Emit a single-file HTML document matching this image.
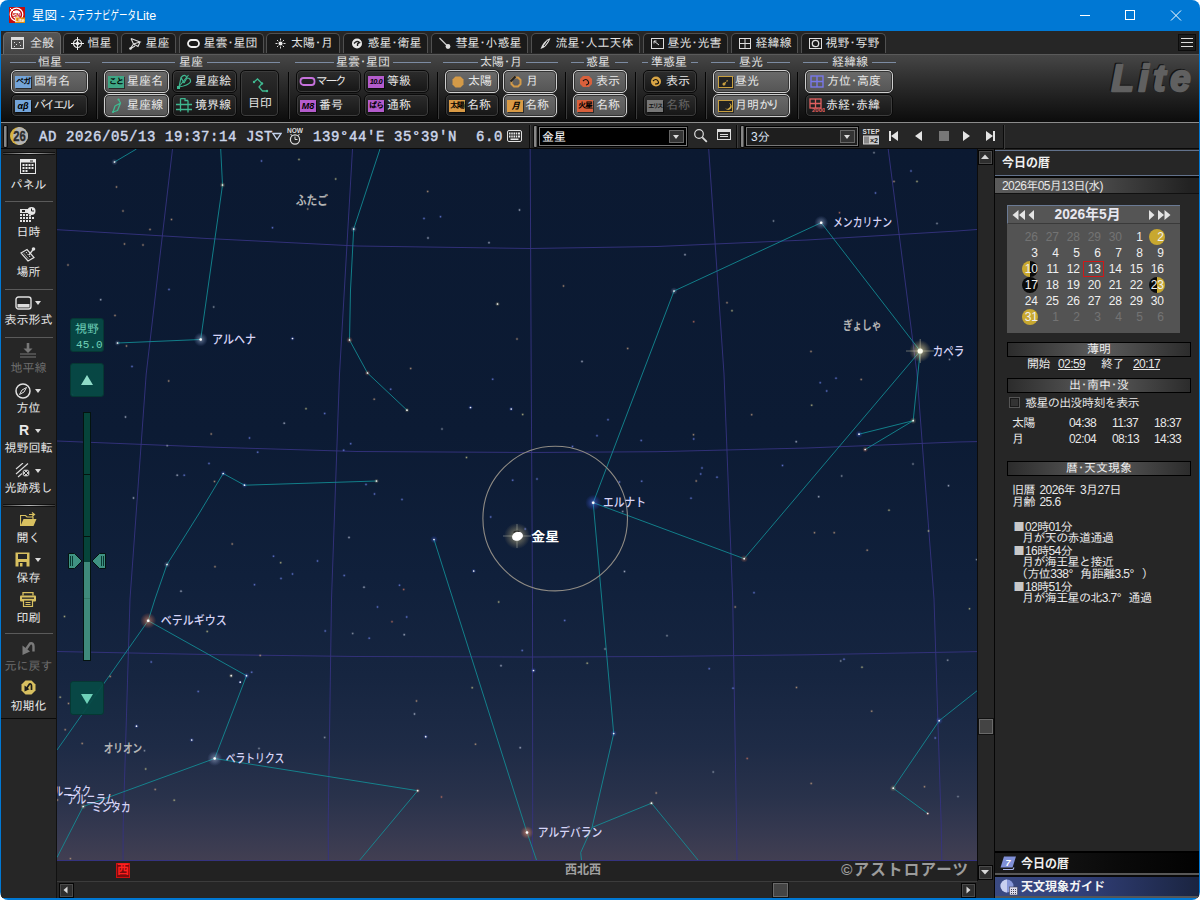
<!DOCTYPE html>
<html lang="ja">
<head>
<meta charset="utf-8">
<title>星図 - ステラナビゲータLite</title>
<style>
*{box-sizing:border-box;margin:0;padding:0}
html,body{width:1200px;height:900px;overflow:hidden;background:#fff}
body{font-family:"Liberation Sans","IPAGothic","Noto Sans CJK JP",sans-serif;font-size:12px;color:#e6e6e6;position:relative}
.abs{position:absolute}
#win{position:absolute;left:0;top:0;width:1200px;height:900px;background:#0078d4;border-radius:8px;overflow:hidden}
#title{position:absolute;left:0;top:0;width:1200px;height:31px;color:#fff}
#title .txt{position:absolute;left:32px;top:7px;font-size:12.5px;line-height:18px;white-space:nowrap;font-family:"Liberation Sans","Noto Sans CJK JP",sans-serif;transform-origin:0 50%}
#kata{display:inline-block;transform:scaleX(.68);transform-origin:0 50%;margin-right:-32px}
#client{position:absolute;left:1px;top:31px;width:1198px;height:867px;background:#262626;overflow:hidden}
/* tabs */
#tabs{position:absolute;left:0;top:0;width:1197px;height:23px;background:#262626}
.tab{position:absolute;top:2px;height:20px;background:#1a1a1a;border:1px solid #505050;border-bottom:none;border-radius:5px 5px 0 0;color:#e4e4e4;font-size:12px;line-height:19px;white-space:nowrap}
.tab.on{top:1px;height:22px;background:linear-gradient(#555,#444);border-color:#6a6a6a;line-height:21px}
.tab span{position:absolute;top:0}
.k{letter-spacing:-2.5px}
b.d{font-weight:normal;display:inline-block;width:6px;text-indent:-3px}
.tab svg{position:absolute}
/* ribbon */
#ribbon{position:absolute;left:0;top:23px;width:1198px;height:68px;background:linear-gradient(#464646 0%,#333 30%,#1c1c1c 70%,#0c0c0c 100%);border-top:1px solid #5a5a5a}
.gl{position:absolute;top:1px;height:13px;font-size:12px;line-height:13px;color:#e0e0e0;text-align:center;white-space:nowrap}
.gline{position:absolute;top:7px;height:1px;background:#7c8ba2}
.sep{position:absolute;top:17px;width:1px;height:47px;background:#050505;box-shadow:1px 0 0 #3a3a3a}
.rb{position:absolute;height:23px;border-radius:5px;background:linear-gradient(#2c2c2c,#161616);border:1px solid #0a0a0a;box-shadow:0 0 0 1px #3c3c3c inset;color:#e8e8e8;font-size:12px;line-height:21px;white-space:nowrap}
.rb.on{background:linear-gradient(#6a6a6a,#555);border:1px solid #cfcfcf;box-shadow:0 0 0 1px #333 inset, 0 0 0 1px #222}
.rb.dis{color:#666}
.rb span{position:absolute;top:0;margin-left:-2px}
.rb svg,.rb i{position:absolute;margin-left:-1px}
.ic{display:block;width:16px;height:12px;font-style:normal;font-size:8px;line-height:12px;box-shadow:1px 1px 0 rgba(0,0,0,.5);text-align:center;color:#000;font-weight:bold;overflow:hidden;letter-spacing:-1px}
/* status */
#status{position:absolute;left:0;top:91px;width:1198px;height:27px;background:#262626;border-top:1px solid #8c8c8c;border-bottom:1px solid #080808}
.mono{font-family:"Liberation Mono",monospace;font-weight:normal;-webkit-text-stroke:.45px #cdd6ea;color:#cdd6ea;font-size:14px;white-space:pre;position:absolute;top:5px;line-height:18px;letter-spacing:.6px}
/* left bar */
#left{position:absolute;left:0;top:118px;width:56px;height:749px;background:#262626}
.lb{position:absolute;left:0;width:55px;text-align:center;font-size:12px;line-height:14px;color:#e8e8e8;white-space:nowrap}
.lb.dis{color:#6c6c6c}
.lsep{position:absolute;left:4px;width:48px;height:1px;background:#5a5a5a}
/* sky */
#sky{position:absolute;left:56px;top:118px;width:920px;height:712px;overflow:hidden;background:#0b1a32}
#compass{position:absolute;left:56px;top:830px;width:920px;height:20px;background:#222}
#hscroll{position:absolute;left:56px;top:850px;width:920px;height:17px;background:#262626;border-top:1px solid #3c3c3c}
#vscroll{position:absolute;left:976px;top:118px;width:18px;height:749px;background:#262626}
/* right */
#right{position:absolute;left:994px;top:118px;width:204px;height:749px;background:#262626;color:#e6e6e6}

#right{font-size:12px;line-height:12px}
#right .bar{position:absolute;left:12px;width:184px;height:15px;border:1px solid #000;background:linear-gradient(90deg,#2c2c2c,#5c5c5c 50%,#2c2c2c);text-align:center;line-height:13px;color:#eee}
#right .t{position:absolute;white-space:nowrap;letter-spacing:-.6px;word-spacing:2px;color:#e8e8e8}
.dg{font-style:normal;margin-right:3px}
#cal{position:absolute;left:12px;top:56px;width:173px;height:128px;background:#535353}
#cal .h{position:absolute;left:0;top:0;width:173px;height:19px;background:#555;border-top:1px solid #6a7a94;border-left:1px solid #6a7a94;border-bottom:1px solid #3a3a3a}
#cal .d{position:absolute;width:20px;height:16px;text-align:right;font:12px/16px "Liberation Sans",sans-serif;color:#f0f0f0}
#cal .d.g{color:#737373}
#cal .m{position:absolute;width:16px;height:16px;border-radius:8px}
</style>
</head>
<body>
<div id="win">
<div id="title">
<svg class="abs" style="left:9px;top:7px" width="16" height="16" viewBox="0 0 16 16"><rect width="16" height="16" fill="#c40d0d"/><circle cx="7.5" cy="7.5" r="6.3" fill="none" stroke="#fff" stroke-width="1.2"/><circle cx="7.5" cy="7.5" r="4.2" fill="#fff"/><line x1="1" y1="1" x2="5" y2="5" stroke="#fff" stroke-width="1"/><text x="7.5" y="9.6" font-size="5.5" font-weight="bold" text-anchor="middle" fill="#c40d0d" font-family="Liberation Sans,sans-serif">SN</text><rect x="6" y="10.5" width="10" height="5.5" fill="#e08a10"/><text x="11" y="15.3" font-size="5.5" font-weight="bold" text-anchor="middle" fill="#fff" font-family="Liberation Sans,sans-serif">Lite</text></svg>
<div class="txt" id="ttxt">星図 - <span id="kata">ステラナビゲータ</span>Lite</div>
<svg class="abs" style="left:1060px;top:0" width="140" height="31" viewBox="0 0 140 31" fill="none" stroke="#fff" stroke-width="1"><line x1="20" y1="15.5" x2="30" y2="15.5"/><rect x="65.5" y="10.5" width="9" height="9"/><line x1="111" y1="10.5" x2="121" y2="20.5"/><line x1="121" y1="10.5" x2="111" y2="20.5"/></svg>
</div>
<div id="client">
<div id="tabs">
<div class="tab on" style="left:2px;width:57.5px"><svg style="left:7px;top:4px" width="13" height="13" viewBox="0 0 13 13"><rect x="0.5" y="0.5" width="12" height="11" fill="none" stroke="#ddd"/><rect x="1" y="1" width="11" height="2" fill="#ddd"/><rect x="3" y="5" width="1" height="1" fill="#ddd"/><rect x="8" y="5" width="1" height="1" fill="#ddd"/><rect x="5" y="7" width="1" height="1" fill="#ddd"/><rect x="3" y="9" width="1" height="1" fill="#ddd"/><rect x="9" y="8" width="1" height="1" fill="#ddd"/></svg><span style="left:26px">全般</span></div>
<div class="tab" style="left:61.5px;width:55.0px"><svg style="left:7px;top:3px" width="13" height="13" viewBox="0 0 13 13"><circle cx="6.5" cy="6.5" r="4" fill="none" stroke="#eee" stroke-width="1.2"/><path d="M6.5 0v13M0 6.5h13" stroke="#eee" stroke-width="1"/><path d="M6.5 4L9 6.5 6.5 9 4 6.5z" fill="#eee"/></svg><span style="left:24px">恒星</span></div>
<div class="tab" style="left:119.5px;width:55.0px"><svg style="left:7px;top:3px" width="13" height="13" viewBox="0 0 13 13"><path d="M2 1.5L4.5 7 1 12M2 1.5L11 5 4.5 7M4.5 7L9 9.5 11 5M1 12l5-3" fill="none" stroke="#ddd" stroke-width="1.1"/><circle cx="1.5" cy="11.5" r="1.3" fill="#ddd"/></svg><span style="left:24px">星座</span></div>
<div class="tab" style="left:177.5px;width:85.0px"><svg style="left:7px;top:3px" width="13" height="13" viewBox="0 0 13 13"><rect x="1" y="3" width="11" height="7" rx="3.5" fill="none" stroke="#f0f0f0" stroke-width="1.8"/></svg><span style="left:24px">星雲<b class="d">・</b>星団</span></div>
<div class="tab" style="left:265px;width:73.5px"><svg style="left:7px;top:3px" width="13" height="13" viewBox="0 0 13 13"><circle cx="6.500" cy="6.500" r="2" fill="#eee"/><path d="M6.500 1.500v2M6.500 9.500v2M1.500 6.500h2M9.500 6.500h2M3 3l1.300 1.300M8.700 8.700L10 10M10 3L8.700 4.300M3 10l1.300-1.300" stroke="#ddd" stroke-width="1"/></svg><span style="left:24px">太陽<b class="d">・</b>月</span></div>
<div class="tab" style="left:341.5px;width:85.0px"><svg style="left:7px;top:3px" width="13" height="13" viewBox="0 0 13 13"><circle cx="6" cy="6.5" r="5" fill="#e8e8e8"/><path d="M3 6.500 Q6 3 8.500 5.500 Q6 6 6.500 9" fill="none" stroke="#222" stroke-width="1.3"/></svg><span style="left:24px">惑星<b class="d">・</b>衛星</span></div>
<div class="tab" style="left:429.5px;width:97.0px"><svg style="left:7px;top:3px" width="13" height="13" viewBox="0 0 13 13"><path d="M0.500 1L8 8.500" stroke="#ccc" stroke-width="1.3"/><circle cx="9" cy="9.500" r="2.400" fill="#ddd"/></svg><span style="left:24px">彗星<b class="d">・</b>小惑星</span></div>
<div class="tab" style="left:529.5px;width:109.0px"><svg style="left:7px;top:3px" width="13" height="13" viewBox="0 0 13 13"><path d="M11.500 1Q6 3 3 8.500L1.500 12l3.500-1.500Q9.500 7 11.500 1z" fill="#ddd"/><path d="M9 3.500L5 9" stroke="#1a1a1a" stroke-width="1"/></svg><span style="left:24px">流星<b class="d">・</b>人工天体</span></div>
<div class="tab" style="left:641.5px;width:85.0px"><svg style="left:7px;top:3px" width="13" height="13" viewBox="0 0 13 13"><rect x="0.500" y="1.500" width="12" height="10" fill="none" stroke="#ddd"/><path d="M3 4l5 4M3 4h2.500M3 4v2.500" stroke="#ddd" stroke-width="1" fill="none"/></svg><span style="left:24px">昼光<b class="d">・</b>光害</span></div>
<div class="tab" style="left:729.5px;width:67.0px"><svg style="left:7px;top:3px" width="13" height="13" viewBox="0 0 13 13"><rect x="0.500" y="1.500" width="11" height="10" fill="none" stroke="#ddd"/><path d="M6 1.500v10M0.500 6.500h11" stroke="#ddd"/></svg><span style="left:24px">経緯線</span></div>
<div class="tab" style="left:799.5px;width:85.0px"><svg style="left:7px;top:3px" width="13" height="13" viewBox="0 0 13 13"><rect x="0.500" y="1.500" width="12" height="10" fill="none" stroke="#ddd"/><circle cx="6.500" cy="6.500" r="3.200" fill="none" stroke="#ddd" stroke-width="1.300"/></svg><span style="left:24px">視野<b class="d">・</b>写野</span></div>
<div class="abs" style="left:1177px;top:3px;width:18px;height:17px;background:#1c1c1c;border:1px solid #0c0c0c"><div class="abs" style="left:2px;top:3px;width:12px;height:1px;background:#ddd;box-shadow:0 4px 0 #ddd,0 8px 0 #ddd"></div></div>
</div>
<div id="ribbon">
<div class="gl" style="left:9px;width:80px">恒星</div>
<div class="gline" style="left:9px;width:26px"></div>
<div class="gline" style="left:64px;width:25px"></div>
<div class="rb on" style="left:10px;top:15px;width:77px"><i class="ic" style="left:4px;top:5px;background:#74a4d8;font-size:8px;">ベガ</i><span style="left:24px">固有名</span></div>
<div class="rb" style="left:10px;top:39px;width:77px"><i class="ic" style="left:4px;top:5px;background:#74a4d8;font-size:9px;font-style:italic;letter-spacing:0;">αβ</i><span class="k" style="left:24px">バイエル</span></div>
<div class="sep" style="left:95px"></div>
<div class="gl" style="left:150px;width:80px">星座</div>
<div class="gline" style="left:101px;width:73px"></div>
<div class="gline" style="left:206px;width:73px"></div>
<div class="rb on" style="left:103px;top:15px;width:65px"><i class="ic" style="left:4px;top:5px;background:#3fa584;font-size:8px;">こと</i><span style="left:24px">星座名</span></div>
<div class="rb on" style="left:103px;top:39px;width:65px"><svg style="left:3px;top:3px" width="18" height="16" viewBox="0 0 18 16"><path d="M6 14L8 8 13.500 5 10.500 12.500zM13.500 5L11.500 1.500" fill="none" stroke="#3fb890" stroke-width="1.300" stroke-linejoin="round"/><circle cx="11.500" cy="1.500" r="1.100" fill="#3fb890"/><circle cx="6" cy="14" r="1.100" fill="#3fb890"/></svg><span style="left:24px">星座線</span></div>
<div class="rb" style="left:171px;top:15px;width:65px"><svg style="left:3px;top:3px" width="18" height="16" viewBox="0 0 18 16"><path d="M4 13L6 3.500Q10 -1 12 4Q16 4 15.500 8Q13 11.500 4 13zM6 3.500Q8 7 9 9M12 4Q10 7 9 9" fill="none" stroke="#3fb890" stroke-width="1.200" stroke-linejoin="round"/><path d="M2.500 14.500L13.500 1" stroke="#3fb890" stroke-width="1.100"/><rect x="2" y="12" width="3" height="3" fill="#3fb890"/></svg><span style="left:24px">星座絵</span></div>
<div class="rb" style="left:171px;top:39px;width:65px"><svg style="left:3px;top:3px" width="18" height="16" viewBox="0 0 18 16"><path d="M1 6.500h16M1 11.500h16M5.500 0.500v13M13 2.500v12M5.500 0.500h4.500v2h3" fill="none" stroke="#3fb890" stroke-width="1.300"/></svg><span style="left:24px">境界線</span></div>
<div class="rb" style="left:239px;top:15px;width:39px;height:47px"><svg style="left:11px;top:7px" width="18" height="15" viewBox="0 0 18 15"><path d="M3 4L6.500 1 11 5.500 8 9 11.500 13H16" fill="none" stroke="#3fb890" stroke-width="1.300"/><circle cx="3" cy="4" r="1.200" fill="#3fb890"/><circle cx="11" cy="5.500" r="1.200" fill="#3fb890"/><circle cx="16" cy="13" r="1.200" fill="#3fb890"/></svg><span style="left:9px;top:22px">目印</span></div>
<div class="sep" style="left:287px"></div>
<div class="gl" style="left:322px;width:80px">星雲<b class="d">・</b>星団</div>
<div class="gline" style="left:294px;width:39px"></div>
<div class="gline" style="left:392px;width:38px"></div>
<div class="rb" style="left:295px;top:15px;width:65px"><svg style="left:3px;top:3px" width="18" height="15" viewBox="0 0 18 15"><rect x="1.500" y="4" width="14" height="7" rx="3" fill="none" stroke="#c672dc" stroke-width="1.800"/></svg><span class="k" style="left:21px">マーク</span></div>
<div class="rb" style="left:363px;top:15px;width:65px"><i class="ic" style="left:4px;top:5px;background:#b45ccc;font-size:7.5px;font-style:italic;letter-spacing:-.5px;">10.0</i><span style="left:24px">等級</span></div>
<div class="rb" style="left:295px;top:39px;width:65px"><i class="ic" style="left:4px;top:5px;background:#b45ccc;font-size:9px;font-style:italic;letter-spacing:0;">M8</i><span style="left:24px">番号</span></div>
<div class="rb" style="left:363px;top:39px;width:65px"><i class="ic" style="left:4px;top:5px;background:#b45ccc;font-size:8px;">ばら</i><span style="left:24px">通称</span></div>
<div class="sep" style="left:436px"></div>
<div class="gl" style="left:460px;width:80px">太陽<b class="d">・</b>月</div>
<div class="gline" style="left:442px;width:35px"></div>
<div class="gline" style="left:525px;width:32px"></div>
<div class="rb on" style="left:444px;top:15px;width:54px"><svg style="left:7px;top:5px" width="12" height="12" viewBox="0 0 12 12"><path d="M3.500 0.500h5l3 3v5l-3 3h-5l-3-3v-5z" fill="#d39a48"/></svg><span style="left:24px">太陽</span></div>
<div class="rb on" style="left:502px;top:15px;width:54px"><svg style="left:7px;top:5px" width="12" height="12" viewBox="0 0 12 12"><path d="M4 1.500h4l2.500 2.500v4l-2.500 2.500h-4l-2.500-2.500v-4z" fill="none" stroke="#d39a48" stroke-width="2"/><path d="M0.500 5.500l5-5" stroke="#222" stroke-width="2.200"/></svg><span style="left:24px">月</span></div>
<div class="rb" style="left:444px;top:39px;width:54px"><i class="ic" style="left:4px;top:5px;background:#d99a45;font-size:8px;">太陽</i><span style="left:23px">名称</span></div>
<div class="rb on" style="left:502px;top:39px;width:54px"><i class="ic" style="left:4px;top:5px;background:#d99a45;font-size:9px;font-style:italic;">月</i><span style="left:23px">名称</span></div>
<div class="sep" style="left:564px"></div>
<div class="gl" style="left:557px;width:80px">惑星</div>
<div class="gline" style="left:570px;width:13px"></div>
<div class="gline" style="left:614px;width:13px"></div>
<div class="rb on" style="left:572px;top:15px;width:54px"><svg style="left:5px;top:3px" width="16" height="15" viewBox="0 0 16 15"><path d="M5 2h6l3 3v5l-3 3H5l-3-3V5z" fill="#d8603c"/><path d="M5 7q3-3 5 0t-2 4" fill="none" stroke="#111" stroke-width="1.200"/></svg><span style="left:24px">表示</span></div>
<div class="rb on" style="left:572px;top:39px;width:54px"><i class="ic" style="left:4px;top:5px;background:#d8603c;font-size:8px;">火星</i><span style="left:24px">名称</span></div>
<div class="sep" style="left:634px"></div>
<div class="gl" style="left:628px;width:80px">準惑星</div>
<div class="gline" style="left:641px;width:6px"></div>
<div class="gline" style="left:690px;width:7px"></div>
<div class="rb" style="left:642px;top:15px;width:54px"><svg style="left:5px;top:3px" width="16" height="15" viewBox="0 0 16 15"><circle cx="8" cy="7.500" r="5" fill="#d9a545"/><path d="M5 7q3-3 5 0t-3 3" fill="none" stroke="#111" stroke-width="1.200"/></svg><span style="left:24px">表示</span></div>
<div class="rb dis" style="left:642px;top:39px;width:54px"><i class="ic" style="left:4px;top:5px;background:#777;font-size:6px;color:#111;letter-spacing:-1.500px;">エリス</i><span style="left:24px">名称</span></div>
<div class="sep" style="left:704px"></div>
<div class="gl" style="left:710px;width:80px">昼光</div>
<div class="gline" style="left:710px;width:24px"></div>
<div class="gline" style="left:766px;width:23px"></div>
<div class="rb on" style="left:712px;top:15px;width:77px"><i class="ic" style="left:5px;top:5px;width:15px;height:12px;background:#222;border:1px solid #c9a040"></i><svg style="left:7px;top:6px" width="12" height="10" viewBox="0 0 12 10"><path d="M3 8l5-5" stroke="#c9a040" stroke-width="1.200" stroke-dasharray="1.500 1"/><circle cx="4" cy="7" r="1.500" fill="#c9a040"/></svg><span style="left:23px">昼光</span></div>
<div class="rb on" style="left:712px;top:39px;width:77px"><i class="ic" style="left:5px;top:5px;width:15px;height:12px;background:#222;border:1px solid #c9a040"></i><svg style="left:8px;top:6px" width="12" height="10" viewBox="0 0 12 10"><path d="M8 2a3.500 3.500 0 1 1-4 5 3 3 0 0 0 4-5z" fill="#d9b045"/></svg><span style="left:23px">月明<span class="k" style="position:static;margin:0;letter-spacing:-3.5px">かり</span></span></div>
<div class="sep" style="left:796px"></div>
<div class="gl" style="left:809px;width:80px">経緯線</div>
<div class="gline" style="left:802px;width:25px"></div>
<div class="gline" style="left:871px;width:24px"></div>
<div class="rb on" style="left:804px;top:15px;width:88px"><svg style="left:5px;top:4px" width="14" height="13" viewBox="0 0 14 13"><rect x="1" y="1" width="12" height="11" fill="none" stroke="#7878e8" stroke-width="1.400"/><path d="M7 1v11M1 6.500h12" stroke="#7878e8" stroke-width="1.400"/></svg><span style="left:23px">方位<b class="d">・</b>高度</span></div>
<div class="rb" style="left:804px;top:39px;width:88px"><svg style="left:4px;top:3px" width="16" height="15" viewBox="0 0 16 15"><rect x="1" y="1" width="11" height="9" fill="none" stroke="#e06060" stroke-width="1.300"/><path d="M6.500 1v9M1 5.500h11" stroke="#e06060" stroke-width="1.300"/><text x="3" y="14" font-size="6" fill="#e06060" font-family="Liberation Sans,sans-serif" font-weight="bold">2000</text></svg><span style="left:22px">赤経<b class="d">・</b>赤緯</span></div>
<svg class="abs" style="left:1100px;top:0" width="98" height="46" viewBox="0 0 98 46" font-family="Liberation Sans,sans-serif" font-size="36.5" font-style="italic" font-weight="bold" stroke-linejoin="round"><text x="10.500" y="36" textLength="79" fill="#151515" stroke="#151515" stroke-width="2.300" transform="translate(-1.200 -1.200)">Lite</text><text x="10.500" y="36" textLength="79" fill="#606060" stroke="#606060" stroke-width="2.300">Lite</text></svg>
</div>
<div id="status">
<div class="abs" style="left:3px;top:3px;width:3px;height:21px;background:linear-gradient(90deg,#777,#999 40%,#333);border-radius:1px;box-shadow:0 0 0 1px #0c0c0c"></div>
<svg class="abs" style="left:9px;top:4px" width="18" height="18" viewBox="0 0 18 18"><defs><clipPath id="mc"><circle cx="9" cy="9" r="9"/></clipPath></defs><circle cx="9" cy="9" r="9" fill="#d8b440"/><ellipse cx="11.500" cy="9" rx="8.500" ry="9.600" fill="#b4b4b4" clip-path="url(#mc)"/><text x="9.500" y="14.200" font-size="14.500" font-weight="bold" text-anchor="middle" fill="#2c2c2c" stroke="#2c2c2c" stroke-width=".4" font-family="Liberation Sans,sans-serif" textLength="12.500" lengthAdjust="spacingAndGlyphs">26</text></svg>
<div class="mono" id="dt" style="left:38px">AD 2026/05/13 19:37:14 JST</div>
<svg class="abs" style="left:271px;top:9px" width="10" height="9" viewBox="0 0 10 9"><path d="M1 1.500h8L5 7.500z" fill="none" stroke="#c4d3ee" stroke-width="1.300"/></svg>
<svg class="abs" style="left:285px;top:3px" width="18" height="20" viewBox="0 0 18 20"><text x="9" y="6.500" font-size="7" font-weight="bold" text-anchor="middle" fill="#ddd" font-family="Liberation Sans,sans-serif" textLength="16" lengthAdjust="spacingAndGlyphs">NOW</text><circle cx="9" cy="13.500" r="4.600" fill="none" stroke="#ddd" stroke-width="1.200"/><path d="M9 10.500v3h2.500" fill="none" stroke="#ddd" stroke-width="1"/><path d="M4.500 8.500l2 1M13.500 8.500l-2 1" stroke="#ddd" stroke-width="1"/></svg>
<div class="mono" id="ll" style="left:312px">139°44'E 35°39'N</div>

<div class="mono" id="mag" style="left:475px">6.0</div>
<svg class="abs" style="left:506px;top:7px" width="15" height="12" viewBox="0 0 15 12"><rect x="0.500" y="0.500" width="14" height="11" rx="1.500" fill="#2a2a2a" stroke="#e0e0e0"/><g fill="#e8e8e8"><rect x="2" y="2.500" width="1.500" height="2"/><rect x="4.250" y="2.500" width="1.500" height="2"/><rect x="6.500" y="2.500" width="1.500" height="2"/><rect x="8.750" y="2.500" width="1.500" height="2"/><rect x="11" y="2.500" width="2" height="2"/><rect x="2" y="5.500" width="1.500" height="2"/><rect x="4.250" y="5.500" width="1.500" height="2"/><rect x="6.500" y="5.500" width="1.500" height="2"/><rect x="8.750" y="5.500" width="1.500" height="2"/><rect x="11" y="5.500" width="2" height="2"/><rect x="3.500" y="8.500" width="8" height="1.500"/></g></svg>
<div class="abs" style="left:528px;top:2px;width:1px;height:23px;background:#0a0a0a;box-shadow:1px 0 0 #3c3c3c"></div>
<div class="abs" style="left:533px;top:3px;width:3px;height:21px;background:linear-gradient(90deg,#777,#999 40%,#333);border-radius:1px;box-shadow:0 0 0 1px #0c0c0c"></div>
<div class="abs" style="left:538px;top:4px;width:148px;height:19px;background:#000;border:1px solid #787878;box-shadow:0 0 0 1px #000"><span class="abs" style="left:2px;top:2px;font-size:12px;line-height:14px;color:#fff">金星</span><div class="abs" style="right:2px;top:2px;width:15px;height:13px;background:#333;border:1px solid #666"><div class="abs" style="left:3px;top:4px;border:3.500px solid transparent;border-top:4px solid #ddd"></div></div></div>
<svg class="abs" style="left:692px;top:5px" width="16" height="15" viewBox="0 0 16 15"><circle cx="6" cy="6" r="4.300" fill="none" stroke="#ddd" stroke-width="1.200"/><path d="M9.300 9.300l4.500 4.500" stroke="#ddd" stroke-width="1.800"/></svg>
<svg class="abs" style="left:716px;top:6px" width="14" height="12" viewBox="0 0 14 12"><rect x="0.500" y="0.500" width="13" height="10" fill="none" stroke="#ddd"/><rect x="1" y="1" width="12" height="2" fill="#ddd"/><path d="M3 5.500h8M3 7.500h8" stroke="#ddd"/></svg>
<div class="abs" style="left:735px;top:2px;width:1px;height:23px;background:#0a0a0a;box-shadow:1px 0 0 #3c3c3c"></div>
<div class="abs" style="left:740px;top:3px;width:3px;height:21px;background:linear-gradient(90deg,#777,#999 40%,#333);border-radius:1px;box-shadow:0 0 0 1px #0c0c0c"></div>
<div class="abs" style="left:745px;top:4px;width:112px;height:19px;background:#1e1e1e;border:1px solid #787878;box-shadow:0 0 0 1px #000"><span class="abs" style="left:4px;top:2px;font-size:12px;line-height:14px;color:#dfe6f5">3分</span><div class="abs" style="right:2px;top:2px;width:15px;height:13px;background:#333;border:1px solid #666"><div class="abs" style="left:3px;top:4px;border:3.500px solid transparent;border-top:4px solid #ddd"></div></div></div>
<svg class="abs" style="left:861px;top:4px" width="18" height="19" viewBox="0 0 18 19"><text x="9" y="7" font-size="7.500" font-weight="bold" text-anchor="middle" fill="#ddd" font-family="Liberation Sans,sans-serif" textLength="17" lengthAdjust="spacingAndGlyphs">STEP</text><rect x="1" y="8.500" width="16" height="9" fill="#ccc"/><rect x="2" y="9.500" width="5" height="7" fill="#888"/><text x="12" y="16" font-size="7" font-weight="bold" text-anchor="middle" fill="#111" font-family="Liberation Sans,sans-serif">×2</text></svg>
<svg class="abs" style="left:885px;top:6px" width="114" height="14" viewBox="0 0 114 14"><g fill="#e4e4e4"><rect x="3" y="2" width="2" height="10"/><path d="M12 2v10L5 7z"/><path d="M36 2v10l-7-5z"/><path d="M77 2v10l7-5z"/><path d="M100 2v10l7-5z"/><rect x="107" y="2" width="2" height="10"/></g><rect x="53" y="2" width="10" height="10" fill="#777"/></svg>
<div class="abs" style="left:1002px;top:2px;width:1px;height:25px;background:#0a0a0a;box-shadow:1px 0 0 #3c3c3c"></div>
</div>
<div id="left">
<div class="abs" style="left:2px;top:3px;width:52px;height:3px;background:linear-gradient(90deg,#3a3a3a,#bbb 50%,#3a3a3a);border-top:1px solid #111;border-bottom:1px solid #111"></div>
<svg class="abs" style="left:19px;top:10px" width="16" height="15" viewBox="0 0 16 15"><rect x="0.500" y="0.500" width="15" height="14" fill="none" stroke="#e8e8e8"/><rect x="1" y="1" width="14" height="2.500" fill="#e8e8e8"/><rect x="10" y="1.500" width="3" height="1" fill="#222"/><g fill="#e8e8e8"><rect x="2.500" y="5" width="2" height="2"/><rect x="5.500" y="5" width="2" height="2"/><rect x="8.500" y="5" width="2" height="2"/><rect x="11.500" y="5" width="2" height="2"/><rect x="2.500" y="8" width="2" height="2"/><rect x="5.500" y="8" width="2" height="2"/><rect x="8.500" y="8" width="2" height="2"/><rect x="11.500" y="8" width="2" height="2"/><rect x="2.500" y="11" width="2" height="2"/><rect x="5.500" y="11" width="2" height="2"/></g></svg>
<div class="lb" style="top:29px">パネル</div>
<div class="lsep" style="top:52px"></div>
<svg class="abs" style="left:19px;top:58px" width="16" height="15" viewBox="0 0 16 15"><g fill="#e0e0e0"><rect x="0" y="2" width="9" height="4"/><rect x="0" y="7" width="2" height="2"/><rect x="3" y="7" width="2" height="2"/><rect x="6" y="7" width="2" height="2"/><rect x="9" y="8" width="2" height="1.500"/><rect x="0" y="10" width="2" height="2"/><rect x="3" y="10" width="2" height="2"/><rect x="6" y="10" width="2" height="2"/><rect x="9" y="10" width="2" height="2"/><rect x="12" y="10" width="2" height="2"/><rect x="0" y="13" width="2" height="2"/><rect x="3" y="13" width="2" height="2"/><rect x="6" y="13" width="2" height="2"/><rect x="9" y="13" width="2" height="2"/></g><rect x="2" y="3" width="3" height="2" fill="#222"/><circle cx="11.500" cy="4" r="4" fill="#e8e8e8"/><path d="M11.500 1.500V4h2.500" stroke="#222" fill="none"/></svg>
<div class="lb" style="top:76px">日時</div>
<svg class="abs" style="left:19px;top:98px" width="16" height="15" viewBox="0 0 16 15"><path d="M1 6l6-3.500 7 8-6 3.500z" fill="none" stroke="#e0e0e0" stroke-width="1.200"/><path d="M4 6.500l4.500 5.500M6 5l4.500 5.500" stroke="#e0e0e0" stroke-dasharray="1.500 1"/><path d="M9 8l4.500-6" stroke="#e0e0e0" stroke-width="1.300"/><circle cx="13.500" cy="2" r="1.800" fill="#e0e0e0"/></svg>
<div class="lb" style="top:116px">場所</div>
<div class="lsep" style="top:140px"></div>
<svg class="abs" style="left:14px;top:147px" width="17" height="14" viewBox="0 0 17 14"><rect x="1" y="1" width="15" height="12" rx="2.500" fill="none" stroke="#e0e0e0" stroke-width="1.400"/><rect x="2.500" y="8" width="12" height="3.500" fill="#ddd"/></svg>
<div class="abs" style="left:34px;top:152px;border:3.5px solid transparent;border-top:4px solid #ddd"></div>
<div class="lb" style="top:164px">表示形式</div>
<div class="lsep" style="top:188px"></div>
<svg class="abs" style="left:19px;top:194px" width="16" height="15" viewBox="0 0 16 15"><path d="M8 0v7" stroke="#777" stroke-width="2.600"/><path d="M3.500 5.500h9L8 10z" fill="#777"/><path d="M0 11h16M0 14h16" stroke="#777" stroke-width="1.200"/></svg>
<div class="lb dis" style="top:212px">地平線</div>
<svg class="abs" style="left:14px;top:234px" width="16" height="16" viewBox="0 0 16 16"><circle cx="8" cy="8" r="7" fill="none" stroke="#e0e0e0" stroke-width="1.500"/><path d="M11.500 4.500L9 9 4.500 11.500 7 7z" fill="none" stroke="#e0e0e0" stroke-width="1"/></svg>
<div class="abs" style="left:34px;top:240px;border:3.5px solid transparent;border-top:4px solid #ddd"></div>
<div class="lb" style="top:252px">方位</div>
<div class="abs" style="left:18px;top:273px;font:bold 14px/16px 'Liberation Sans',sans-serif;color:#e8e8e8">R</div>
<div class="abs" style="left:34px;top:280px;border:3.5px solid transparent;border-top:4px solid #ddd"></div>
<div class="lb" style="top:292px">視野回転</div>
<svg class="abs" style="left:14px;top:314px" width="17" height="15" viewBox="0 0 17 15"><path d="M1 6l7-6M1 11L13 0.500M3 14l4-3.500" stroke="#ddd" stroke-width="1.100"/><circle cx="11" cy="10" r="3.800" fill="#ccc" stroke="#222" stroke-width=".6"/><path d="M9 8l4 4M13 8l-4 4" stroke="#222" stroke-width="1"/></svg>
<div class="abs" style="left:34px;top:320px;border:3.5px solid transparent;border-top:4px solid #ddd"></div>
<div class="lb" style="top:332px">光跡残し</div>
<div class="abs" style="left:2px;top:355px;width:52px;height:3px;background:linear-gradient(90deg,#3a3a3a,#bbb 50%,#3a3a3a);border-top:1px solid #111;border-bottom:1px solid #111"></div>
<svg class="abs" style="left:19px;top:363px" width="17" height="15" viewBox="0 0 17 15"><path d="M0.500 14V3.500h5l1.500 1.500h6V7" fill="none" stroke="#d8c060" stroke-width="1.200"/><path d="M0.500 14l3-7h13l-3 7z" fill="#d8c060"/><path d="M9 2.500h5M12 0.500l2.500 2-2.500 2" fill="none" stroke="#d8c060" stroke-width="1.200"/></svg>
<div class="lb" style="top:382px">開く</div>
<svg class="abs" style="left:14px;top:403px" width="15" height="15" viewBox="0 0 15 15"><path d="M0.500 0.500h14v14h-14z" fill="#d8c060"/><rect x="3" y="2" width="9" height="5" fill="#262626"/><rect x="3.500" y="10" width="8" height="5" fill="#262626"/><rect x="5" y="11" width="2.500" height="3.500" fill="#d8c060"/></svg>
<div class="abs" style="left:34px;top:409px;border:3.5px solid transparent;border-top:4px solid #ddd"></div>
<div class="lb" style="top:422px">保存</div>
<svg class="abs" style="left:19px;top:443px" width="16" height="15" viewBox="0 0 16 15"><path d="M3 3.500V0.500h10v3" fill="none" stroke="#d8c060" stroke-width="1.300"/><rect x="0" y="3.500" width="16" height="6" rx="1" fill="#d8c060"/><rect x="2" y="5.500" width="12" height="1.300" fill="#262626"/><rect x="3.500" y="8" width="9" height="6.500" fill="#262626" stroke="#d8c060" stroke-width="1.200"/><path d="M5.500 10.500h5M5.500 12.500h5" stroke="#d8c060" stroke-width="1"/></svg>
<div class="lb" style="top:462px">印刷</div>
<div class="lsep" style="top:484px"></div>
<svg class="abs" style="left:21px;top:492px" width="13" height="15" viewBox="0 0 13 15"><path d="M11.500 10.500V5.500Q11.500 1.500 8 2.500L3.500 9" fill="none" stroke="#7a7a7a" stroke-width="2.400"/><path d="M0.500 4.500v9.500l7.500-3.500z" fill="#7a7a7a"/></svg>
<div class="lb dis" style="top:510px">元に戻す</div>
<svg class="abs" style="left:20px;top:531px" width="15" height="15" viewBox="0 0 15 15"><path d="M4.500 0.500h6l4 4v6l-4 4h-6l-4-4v-6z" fill="#d8c060"/><path d="M10.500 10V6Q10.500 3.500 8.500 4L5.500 8.500" fill="none" stroke="#1c1c1c" stroke-width="1.700"/><path d="M3.500 5.500v6l5-2.300z" fill="#1c1c1c"/></svg>
<div class="lb" style="top:550px">初期化</div>
<div class="abs" style="left:0;top:569px;width:56px;height:1px;background:#0a0a0a"></div>
<div class="abs" style="left:55px;top:0;width:1px;height:749px;background:#111"></div>
</div>
<div id="sky">
<!--SKY0--><svg class="abs" style="left:0;top:0" width="920" height="712" viewBox="57 149 920 712" font-family="Liberation Sans,Noto Sans CJK JP,sans-serif">
<defs>
<linearGradient id="skyg" x1="0" y1="0" x2="0" y2="1">
<stop offset="0" stop-color="#0b1931"/><stop offset=".40" stop-color="#0c1b34"/><stop offset=".60" stop-color="#10203b"/><stop offset=".74" stop-color="#162540"/><stop offset=".84" stop-color="#1e2b46"/><stop offset=".91" stop-color="#29324b"/><stop offset=".96" stop-color="#363950"/><stop offset="1" stop-color="#423f52"/>
</linearGradient>
<radialGradient id="gw"><stop offset="0" stop-color="#fff" stop-opacity=".9"/><stop offset=".25" stop-color="#cfe0ff" stop-opacity=".45"/><stop offset="1" stop-color="#8fb0ff" stop-opacity="0"/></radialGradient>
<radialGradient id="gb"><stop offset="0" stop-color="#dfe6ff" stop-opacity=".95"/><stop offset=".3" stop-color="#5878ff" stop-opacity=".5"/><stop offset="1" stop-color="#3050ff" stop-opacity="0"/></radialGradient>
<radialGradient id="go"><stop offset="0" stop-color="#fff" stop-opacity=".95"/><stop offset=".3" stop-color="#ff9a70" stop-opacity=".55"/><stop offset="1" stop-color="#ff7040" stop-opacity="0"/></radialGradient>
<radialGradient id="gy"><stop offset="0" stop-color="#fff" stop-opacity=".95"/><stop offset=".3" stop-color="#f0e0a0" stop-opacity=".5"/><stop offset="1" stop-color="#e0c070" stop-opacity="0"/></radialGradient>
</defs>
<rect x="57" y="149" width="920" height="712" fill="url(#skyg)"/>
<path d="M172.5 149 L146.2 374 L130 599 L123.2 824 L123 860" fill="none" stroke="#35337f" stroke-width="1" opacity=".9"/>
<path d="M352.5 149 L339.5 374 L331.5 599 L328.2 824 L328.4 860" fill="none" stroke="#35337f" stroke-width="1" opacity=".9"/>
<path d="M530.2 149 L531.2 374 L532.5 599 L532.7 824 L532.2 860" fill="none" stroke="#35337f" stroke-width="1" opacity=".9"/>
<path d="M708.7 149 L724 374 L732.7 599 L736.5 824 L737 860" fill="none" stroke="#35337f" stroke-width="1" opacity=".9"/>
<path d="M888.2 149 L917 374 L934 599 L941.2 824 L941.8 860" fill="none" stroke="#35337f" stroke-width="1" opacity=".9"/>
<path d="M57 229.7 L207 238.5 L357 246 L530 248.5 L657 246.5 L807 240 L957 231 L977 229.5" fill="none" stroke="#35337f" stroke-width="1" opacity=".9"/>
<path d="M57 441 L207 447 L357 451.5 L530 452.5 L657 451.7 L807 448 L957 442 L977 441.6" fill="none" stroke="#35337f" stroke-width="1" opacity=".9"/>
<path d="M57 651.5 L207 654.5 L357 656.5 L530 657 L657 656.5 L807 654.8 L957 652 L977 651.6" fill="none" stroke="#35337f" stroke-width="1" opacity=".9"/>
<path d="M57 860.5H977" stroke="#35337f" stroke-width="1"/>
<path d="M136.5 149 L114.5 162" fill="none" stroke="#138f98" stroke-width="1" stroke-opacity=".85"/>
<path d="M220.7 149 L222.5 185 L200.7 339.5 L117.5 343" fill="none" stroke="#138f98" stroke-width="1" stroke-opacity=".85"/>
<path d="M380 149 L353.7 229 L350.5 290 L349.5 340 L367.5 373 L407 410.2" fill="none" stroke="#138f98" stroke-width="1" stroke-opacity=".85"/>
<path d="M821.2 222.7 L674 291 L593.2 502.7" fill="none" stroke="#138f98" stroke-width="1" stroke-opacity=".85"/>
<path d="M821.2 222.7 L920.2 351 L744.2 558.7 L593.2 502.7 L613.7 733.5 L592 827.5 L580.7 852.5 L581.5 860" fill="none" stroke="#138f98" stroke-width="1" stroke-opacity=".85"/>
<path d="M920.2 351 L913.2 420.7 L859 434.2 M913.2 420.7 L865.2 449.5" fill="none" stroke="#138f98" stroke-width="1" stroke-opacity=".85"/>
<path d="M376.5 481 L244.5 485.2 L223.2 473.5 L200 512 L167 564.5 L155 599 L148.2 620.7 L57 750" fill="none" stroke="#138f98" stroke-width="1" stroke-opacity=".85"/>
<path d="M148.2 620.7 L246.5 675.7 L214.7 758.5 L417.7 790.7 L359.8 860" fill="none" stroke="#138f98" stroke-width="1" stroke-opacity=".85"/>
<path d="M214.7 758.5 L83.2 806.5 L57 857.5" fill="none" stroke="#138f98" stroke-width="1" stroke-opacity=".85"/>
<path d="M434 539.5 L527 832.5 L536.5 860" fill="none" stroke="#138f98" stroke-width="1" stroke-opacity=".85"/>
<path d="M592 827.5 L651.5 803.2 L698 860" fill="none" stroke="#138f98" stroke-width="1" stroke-opacity=".85"/>
<path d="M977 690.8 L939.2 720.7 L893.2 788.2 L927.7 813.5" fill="none" stroke="#138f98" stroke-width="1" stroke-opacity=".85"/>
<circle cx="555.2" cy="518.6" r="72.3" fill="none" stroke="#8f8b84" stroke-width="1.1"/>
<circle cx="116.5" cy="187" r="1.4" fill="#c8a283" opacity=".2"/><circle cx="116.5" cy="187" r=".7" fill="#c8a283" opacity=".7"/>
<circle cx="123" cy="211" r="1.4" fill="#c8a283" opacity=".2"/><circle cx="123" cy="211" r=".7" fill="#c8a283" opacity=".7"/>
<circle cx="171.5" cy="219.5" r="1.4" fill="#c8a283" opacity=".2"/><circle cx="171.5" cy="219.5" r=".7" fill="#c8a283" opacity=".7"/>
<circle cx="150" cy="229.5" r="1.4" fill="#c8a283" opacity=".2"/><circle cx="150" cy="229.5" r=".7" fill="#c8a283" opacity=".7"/>
<circle cx="124.5" cy="244" r="1.4" fill="#c8a283" opacity=".2"/><circle cx="124.5" cy="244" r=".7" fill="#c8a283" opacity=".7"/>
<circle cx="143" cy="245" r="1.4" fill="#c8a283" opacity=".2"/><circle cx="143" cy="245" r=".7" fill="#c8a283" opacity=".7"/>
<circle cx="68" cy="265" r="1.4" fill="#c8a283" opacity=".2"/><circle cx="68" cy="265" r=".7" fill="#c8a283" opacity=".7"/>
<circle cx="169" cy="289.5" r="1.4" fill="#7486ee" opacity=".2"/><circle cx="169" cy="289.5" r=".7" fill="#7486ee" opacity=".7"/>
<circle cx="100.7" cy="299.7" r="1.4" fill="#c3cbe0" opacity=".2"/><circle cx="100.7" cy="299.7" r=".7" fill="#c3cbe0" opacity=".7"/>
<circle cx="213.7" cy="307" r="1.4" fill="#a0a8b8" opacity=".2"/><circle cx="213.7" cy="307" r=".7" fill="#a0a8b8" opacity=".7"/>
<circle cx="115" cy="315.5" r="1.4" fill="#c8a283" opacity=".2"/><circle cx="115" cy="315.5" r=".7" fill="#c8a283" opacity=".7"/>
<circle cx="126.5" cy="346" r="1.4" fill="#c8a283" opacity=".2"/><circle cx="126.5" cy="346" r=".7" fill="#c8a283" opacity=".7"/>
<circle cx="132" cy="366.5" r="1.4" fill="#7486ee" opacity=".2"/><circle cx="132" cy="366.5" r=".7" fill="#7486ee" opacity=".7"/>
<circle cx="261.5" cy="161" r="1.4" fill="#7486ee" opacity=".2"/><circle cx="261.5" cy="161" r=".7" fill="#7486ee" opacity=".7"/>
<circle cx="299" cy="159.5" r="1.4" fill="#c9c68e" opacity=".2"/><circle cx="299" cy="159.5" r=".7" fill="#c9c68e" opacity=".7"/>
<circle cx="335.7" cy="179" r="1.4" fill="#c9c68e" opacity=".2"/><circle cx="335.7" cy="179" r=".7" fill="#c9c68e" opacity=".7"/>
<circle cx="307.7" cy="209" r="1.4" fill="#c8a283" opacity=".2"/><circle cx="307.7" cy="209" r=".7" fill="#c8a283" opacity=".7"/>
<circle cx="272.5" cy="227.7" r="1.4" fill="#7486ee" opacity=".2"/><circle cx="272.5" cy="227.7" r=".7" fill="#7486ee" opacity=".7"/>
<circle cx="427.7" cy="191.5" r="1.4" fill="#c8a283" opacity=".2"/><circle cx="427.7" cy="191.5" r=".7" fill="#c8a283" opacity=".7"/>
<circle cx="424" cy="218.5" r="1.4" fill="#7486ee" opacity=".2"/><circle cx="424" cy="218.5" r=".7" fill="#7486ee" opacity=".7"/>
<circle cx="440.5" cy="216.7" r="1.4" fill="#7486ee" opacity=".2"/><circle cx="440.5" cy="216.7" r=".7" fill="#7486ee" opacity=".7"/>
<circle cx="428" cy="238" r="1.4" fill="#c3cbe0" opacity=".2"/><circle cx="428" cy="238" r=".7" fill="#c3cbe0" opacity=".7"/>
<circle cx="519.5" cy="210" r="1.4" fill="#c3cbe0" opacity=".2"/><circle cx="519.5" cy="210" r=".7" fill="#c3cbe0" opacity=".7"/>
<circle cx="489" cy="242.7" r="1.4" fill="#c3cbe0" opacity=".2"/><circle cx="489" cy="242.7" r=".7" fill="#c3cbe0" opacity=".7"/>
<circle cx="563.5" cy="286" r="1.4" fill="#c8a283" opacity=".2"/><circle cx="563.5" cy="286" r=".7" fill="#c8a283" opacity=".7"/>
<circle cx="517" cy="339" r="1.4" fill="#c8a283" opacity=".2"/><circle cx="517" cy="339" r=".7" fill="#c8a283" opacity=".7"/>
<circle cx="627.7" cy="348.5" r="1.4" fill="#c8a283" opacity=".2"/><circle cx="627.7" cy="348.5" r=".7" fill="#c8a283" opacity=".7"/>
<circle cx="582" cy="361.5" r="1.4" fill="#c3cbe0" opacity=".2"/><circle cx="582" cy="361.5" r=".7" fill="#c3cbe0" opacity=".7"/>
<circle cx="410.7" cy="368.5" r="1.4" fill="#c8a283" opacity=".2"/><circle cx="410.7" cy="368.5" r=".7" fill="#c8a283" opacity=".7"/>
<circle cx="874" cy="152.7" r="1.4" fill="#a0a8b8" opacity=".2"/><circle cx="874" cy="152.7" r=".7" fill="#a0a8b8" opacity=".7"/>
<circle cx="911" cy="171" r="1.4" fill="#7486ee" opacity=".2"/><circle cx="911" cy="171" r=".7" fill="#7486ee" opacity=".7"/>
<circle cx="894" cy="181.5" r="1.4" fill="#c8a283" opacity=".2"/><circle cx="894" cy="181.5" r=".7" fill="#c8a283" opacity=".7"/>
<circle cx="917" cy="181.5" r="1.4" fill="#c9c68e" opacity=".2"/><circle cx="917" cy="181.5" r=".7" fill="#c9c68e" opacity=".7"/>
<circle cx="875.5" cy="193" r="1.4" fill="#7486ee" opacity=".2"/><circle cx="875.5" cy="193" r=".7" fill="#7486ee" opacity=".7"/>
<circle cx="839.5" cy="212.7" r="1.4" fill="#cf7763" opacity=".2"/><circle cx="839.5" cy="212.7" r=".7" fill="#cf7763" opacity=".7"/>
<circle cx="773.5" cy="221" r="1.4" fill="#a0a8b8" opacity=".2"/><circle cx="773.5" cy="221" r=".7" fill="#a0a8b8" opacity=".7"/>
<circle cx="937" cy="223.5" r="1.4" fill="#a0a8b8" opacity=".2"/><circle cx="937" cy="223.5" r=".7" fill="#a0a8b8" opacity=".7"/>
<circle cx="685" cy="254.7" r="1.4" fill="#c3cbe0" opacity=".2"/><circle cx="685" cy="254.7" r=".7" fill="#c3cbe0" opacity=".7"/>
<circle cx="727" cy="302.7" r="1.4" fill="#c8a283" opacity=".2"/><circle cx="727" cy="302.7" r=".7" fill="#c8a283" opacity=".7"/>
<circle cx="732" cy="310.7" r="1.4" fill="#c9c68e" opacity=".2"/><circle cx="732" cy="310.7" r=".7" fill="#c9c68e" opacity=".7"/>
<circle cx="693.7" cy="321.7" r="1.4" fill="#cf7763" opacity=".2"/><circle cx="693.7" cy="321.7" r=".7" fill="#cf7763" opacity=".7"/>
<circle cx="811" cy="351.5" r="1.4" fill="#c8a283" opacity=".2"/><circle cx="811" cy="351.5" r=".7" fill="#c8a283" opacity=".7"/>
<circle cx="949.5" cy="359.5" r="1.4" fill="#a0a8b8" opacity=".2"/><circle cx="949.5" cy="359.5" r=".7" fill="#a0a8b8" opacity=".7"/>
<circle cx="168.7" cy="381" r="1.4" fill="#c8a283" opacity=".2"/><circle cx="168.7" cy="381" r=".7" fill="#c8a283" opacity=".7"/>
<circle cx="125.5" cy="417" r="1.4" fill="#c3cbe0" opacity=".2"/><circle cx="125.5" cy="417" r=".7" fill="#c3cbe0" opacity=".7"/>
<circle cx="211.2" cy="434" r="1.4" fill="#c8a283" opacity=".2"/><circle cx="211.2" cy="434" r=".7" fill="#c8a283" opacity=".7"/>
<circle cx="167.2" cy="445.7" r="1.4" fill="#a0a8b8" opacity=".2"/><circle cx="167.2" cy="445.7" r=".7" fill="#a0a8b8" opacity=".7"/>
<circle cx="249.5" cy="438" r="1.4" fill="#7486ee" opacity=".2"/><circle cx="249.5" cy="438" r=".7" fill="#7486ee" opacity=".7"/>
<circle cx="284.2" cy="423.2" r="1.4" fill="#c3cbe0" opacity=".2"/><circle cx="284.2" cy="423.2" r=".7" fill="#c3cbe0" opacity=".7"/>
<circle cx="306" cy="408.7" r="1.4" fill="#c9c68e" opacity=".2"/><circle cx="306" cy="408.7" r=".7" fill="#c9c68e" opacity=".7"/>
<circle cx="324.7" cy="413.5" r="1.4" fill="#7486ee" opacity=".2"/><circle cx="324.7" cy="413.5" r=".7" fill="#7486ee" opacity=".7"/>
<circle cx="350.7" cy="443.7" r="1.4" fill="#7486ee" opacity=".2"/><circle cx="350.7" cy="443.7" r=".7" fill="#7486ee" opacity=".7"/>
<circle cx="343.7" cy="450.2" r="1.4" fill="#7486ee" opacity=".2"/><circle cx="343.7" cy="450.2" r=".7" fill="#7486ee" opacity=".7"/>
<circle cx="257.7" cy="452.2" r="1.4" fill="#7486ee" opacity=".2"/><circle cx="257.7" cy="452.2" r=".7" fill="#7486ee" opacity=".7"/>
<circle cx="209" cy="463.5" r="1.4" fill="#7486ee" opacity=".2"/><circle cx="209" cy="463.5" r=".7" fill="#7486ee" opacity=".7"/>
<circle cx="177.2" cy="475.2" r="1.4" fill="#c3cbe0" opacity=".2"/><circle cx="177.2" cy="475.2" r=".7" fill="#c3cbe0" opacity=".7"/>
<circle cx="184.2" cy="475.2" r="1.4" fill="#7486ee" opacity=".2"/><circle cx="184.2" cy="475.2" r=".7" fill="#7486ee" opacity=".7"/>
<circle cx="214.5" cy="481.5" r="1.4" fill="#c8a283" opacity=".2"/><circle cx="214.5" cy="481.5" r=".7" fill="#c8a283" opacity=".7"/>
<circle cx="133.5" cy="498" r="1.4" fill="#c3cbe0" opacity=".2"/><circle cx="133.5" cy="498" r=".7" fill="#c3cbe0" opacity=".7"/>
<circle cx="232.2" cy="544" r="1.4" fill="#c8a283" opacity=".2"/><circle cx="232.2" cy="544" r=".7" fill="#c8a283" opacity=".7"/>
<circle cx="349" cy="537.5" r="1.4" fill="#c3cbe0" opacity=".2"/><circle cx="349" cy="537.5" r=".7" fill="#c3cbe0" opacity=".7"/>
<circle cx="273.5" cy="556.2" r="1.4" fill="#7486ee" opacity=".2"/><circle cx="273.5" cy="556.2" r=".7" fill="#7486ee" opacity=".7"/>
<circle cx="280.7" cy="562.7" r="1.4" fill="#c9c68e" opacity=".2"/><circle cx="280.7" cy="562.7" r=".7" fill="#c9c68e" opacity=".7"/>
<circle cx="317.5" cy="561" r="1.4" fill="#7486ee" opacity=".2"/><circle cx="317.5" cy="561" r=".7" fill="#7486ee" opacity=".7"/>
<circle cx="215" cy="566.7" r="1.4" fill="#c8a283" opacity=".2"/><circle cx="215" cy="566.7" r=".7" fill="#c8a283" opacity=".7"/>
<circle cx="292.5" cy="574" r="1.4" fill="#7486ee" opacity=".2"/><circle cx="292.5" cy="574" r=".7" fill="#7486ee" opacity=".7"/>
<circle cx="281" cy="578.5" r="1.4" fill="#7486ee" opacity=".2"/><circle cx="281" cy="578.5" r=".7" fill="#7486ee" opacity=".7"/>
<circle cx="344.2" cy="575.5" r="1.4" fill="#7486ee" opacity=".2"/><circle cx="344.2" cy="575.5" r=".7" fill="#7486ee" opacity=".7"/>
<circle cx="254.5" cy="584.7" r="1.4" fill="#7486ee" opacity=".2"/><circle cx="254.5" cy="584.7" r=".7" fill="#7486ee" opacity=".7"/>
<circle cx="181" cy="591.2" r="1.4" fill="#c3cbe0" opacity=".2"/><circle cx="181" cy="591.2" r=".7" fill="#c3cbe0" opacity=".7"/>
<circle cx="72.5" cy="394.7" r="1.4" fill="#7486ee" opacity=".2"/><circle cx="72.5" cy="394.7" r=".7" fill="#7486ee" opacity=".7"/>
<circle cx="492.7" cy="379.2" r="1.4" fill="#7486ee" opacity=".2"/><circle cx="492.7" cy="379.2" r=".7" fill="#7486ee" opacity=".7"/>
<circle cx="390.7" cy="389.2" r="1.4" fill="#7486ee" opacity=".2"/><circle cx="390.7" cy="389.2" r=".7" fill="#7486ee" opacity=".7"/>
<circle cx="374.2" cy="399.2" r="1.4" fill="#c8a283" opacity=".2"/><circle cx="374.2" cy="399.2" r=".7" fill="#c8a283" opacity=".7"/>
<circle cx="522.7" cy="414.5" r="1.4" fill="#c9c68e" opacity=".2"/><circle cx="522.7" cy="414.5" r=".7" fill="#c9c68e" opacity=".7"/>
<circle cx="442" cy="429" r="1.4" fill="#a0a8b8" opacity=".2"/><circle cx="442" cy="429" r=".7" fill="#a0a8b8" opacity=".7"/>
<circle cx="608" cy="419.7" r="1.4" fill="#7486ee" opacity=".2"/><circle cx="608" cy="419.7" r=".7" fill="#7486ee" opacity=".7"/>
<circle cx="597" cy="435.7" r="1.4" fill="#7486ee" opacity=".2"/><circle cx="597" cy="435.7" r=".7" fill="#7486ee" opacity=".7"/>
<circle cx="641.2" cy="440.5" r="1.4" fill="#7486ee" opacity=".2"/><circle cx="641.2" cy="440.5" r=".7" fill="#7486ee" opacity=".7"/>
<circle cx="572.5" cy="446.5" r="1.4" fill="#7486ee" opacity=".2"/><circle cx="572.5" cy="446.5" r=".7" fill="#7486ee" opacity=".7"/>
<circle cx="466.5" cy="457.5" r="1.4" fill="#c9c68e" opacity=".2"/><circle cx="466.5" cy="457.5" r=".7" fill="#c9c68e" opacity=".7"/>
<circle cx="512.7" cy="480.2" r="1.4" fill="#7486ee" opacity=".2"/><circle cx="512.7" cy="480.2" r=".7" fill="#7486ee" opacity=".7"/>
<circle cx="537" cy="479" r="1.4" fill="#7486ee" opacity=".2"/><circle cx="537" cy="479" r=".7" fill="#7486ee" opacity=".7"/>
<circle cx="619.5" cy="482" r="1.4" fill="#7486ee" opacity=".2"/><circle cx="619.5" cy="482" r=".7" fill="#7486ee" opacity=".7"/>
<circle cx="641.7" cy="481.2" r="1.4" fill="#7486ee" opacity=".2"/><circle cx="641.7" cy="481.2" r=".7" fill="#7486ee" opacity=".7"/>
<circle cx="366" cy="484.5" r="1.4" fill="#7486ee" opacity=".2"/><circle cx="366" cy="484.5" r=".7" fill="#7486ee" opacity=".7"/>
<circle cx="374.5" cy="494" r="1.4" fill="#7486ee" opacity=".2"/><circle cx="374.5" cy="494" r=".7" fill="#7486ee" opacity=".7"/>
<circle cx="402" cy="499.5" r="1.4" fill="#7486ee" opacity=".2"/><circle cx="402" cy="499.5" r=".7" fill="#7486ee" opacity=".7"/>
<circle cx="490.7" cy="517" r="1.4" fill="#7486ee" opacity=".2"/><circle cx="490.7" cy="517" r=".7" fill="#7486ee" opacity=".7"/>
<circle cx="525.2" cy="529" r="1.4" fill="#7486ee" opacity=".2"/><circle cx="525.2" cy="529" r=".7" fill="#7486ee" opacity=".7"/>
<circle cx="622.7" cy="511.5" r="1.4" fill="#a0a8b8" opacity=".2"/><circle cx="622.7" cy="511.5" r=".7" fill="#a0a8b8" opacity=".7"/>
<circle cx="624.5" cy="571.5" r="1.4" fill="#c3cbe0" opacity=".2"/><circle cx="624.5" cy="571.5" r=".7" fill="#c3cbe0" opacity=".7"/>
<circle cx="399.5" cy="585.2" r="1.4" fill="#7486ee" opacity=".2"/><circle cx="399.5" cy="585.2" r=".7" fill="#7486ee" opacity=".7"/>
<circle cx="403.7" cy="589.5" r="1.4" fill="#cf7763" opacity=".2"/><circle cx="403.7" cy="589.5" r=".7" fill="#cf7763" opacity=".7"/>
<circle cx="364" cy="587.2" r="1.4" fill="#c3cbe0" opacity=".2"/><circle cx="364" cy="587.2" r=".7" fill="#c3cbe0" opacity=".7"/>
<circle cx="836" cy="378.2" r="1.4" fill="#7486ee" opacity=".2"/><circle cx="836" cy="378.2" r=".7" fill="#7486ee" opacity=".7"/>
<circle cx="820.2" cy="382.7" r="1.4" fill="#7486ee" opacity=".2"/><circle cx="820.2" cy="382.7" r=".7" fill="#7486ee" opacity=".7"/>
<circle cx="861.2" cy="379.5" r="1.4" fill="#c8a283" opacity=".2"/><circle cx="861.2" cy="379.5" r=".7" fill="#c8a283" opacity=".7"/>
<circle cx="826.7" cy="391" r="1.4" fill="#7486ee" opacity=".2"/><circle cx="826.7" cy="391" r=".7" fill="#7486ee" opacity=".7"/>
<circle cx="811.7" cy="405.2" r="1.4" fill="#c9c68e" opacity=".2"/><circle cx="811.7" cy="405.2" r=".7" fill="#c9c68e" opacity=".7"/>
<circle cx="751.7" cy="414.7" r="1.4" fill="#c8a283" opacity=".2"/><circle cx="751.7" cy="414.7" r=".7" fill="#c8a283" opacity=".7"/>
<circle cx="693.5" cy="434.7" r="1.4" fill="#c8a283" opacity=".2"/><circle cx="693.5" cy="434.7" r=".7" fill="#c8a283" opacity=".7"/>
<circle cx="693.7" cy="439" r="1.4" fill="#7486ee" opacity=".2"/><circle cx="693.7" cy="439" r=".7" fill="#7486ee" opacity=".7"/>
<circle cx="796.2" cy="441.7" r="1.4" fill="#c3cbe0" opacity=".2"/><circle cx="796.2" cy="441.7" r=".7" fill="#c3cbe0" opacity=".7"/>
<circle cx="782.5" cy="465.5" r="1.4" fill="#7486ee" opacity=".2"/><circle cx="782.5" cy="465.5" r=".7" fill="#7486ee" opacity=".7"/>
<circle cx="702" cy="468" r="1.4" fill="#7486ee" opacity=".2"/><circle cx="702" cy="468" r=".7" fill="#7486ee" opacity=".7"/>
<circle cx="700.7" cy="474" r="1.4" fill="#7486ee" opacity=".2"/><circle cx="700.7" cy="474" r=".7" fill="#7486ee" opacity=".7"/>
<circle cx="696.2" cy="481" r="1.4" fill="#c8a283" opacity=".2"/><circle cx="696.2" cy="481" r=".7" fill="#c8a283" opacity=".7"/>
<circle cx="717" cy="477.2" r="1.4" fill="#7486ee" opacity=".2"/><circle cx="717" cy="477.2" r=".7" fill="#7486ee" opacity=".7"/>
<circle cx="691" cy="498.2" r="1.4" fill="#7486ee" opacity=".2"/><circle cx="691" cy="498.2" r=".7" fill="#7486ee" opacity=".7"/>
<circle cx="841.7" cy="476" r="1.4" fill="#a0a8b8" opacity=".2"/><circle cx="841.7" cy="476" r=".7" fill="#a0a8b8" opacity=".7"/>
<circle cx="913" cy="464" r="1.4" fill="#a0a8b8" opacity=".2"/><circle cx="913" cy="464" r=".7" fill="#a0a8b8" opacity=".7"/>
<circle cx="948.5" cy="485.7" r="1.4" fill="#c3cbe0" opacity=".2"/><circle cx="948.5" cy="485.7" r=".7" fill="#c3cbe0" opacity=".7"/>
<circle cx="818.7" cy="496.7" r="1.4" fill="#c3cbe0" opacity=".2"/><circle cx="818.7" cy="496.7" r=".7" fill="#c3cbe0" opacity=".7"/>
<circle cx="889" cy="510.2" r="1.4" fill="#c9c68e" opacity=".2"/><circle cx="889" cy="510.2" r=".7" fill="#c9c68e" opacity=".7"/>
<circle cx="814.5" cy="532.7" r="1.4" fill="#c8a283" opacity=".2"/><circle cx="814.5" cy="532.7" r=".7" fill="#c8a283" opacity=".7"/>
<circle cx="834.2" cy="532.7" r="1.4" fill="#c8a283" opacity=".2"/><circle cx="834.2" cy="532.7" r=".7" fill="#c8a283" opacity=".7"/>
<circle cx="928.5" cy="531" r="1.4" fill="#c9c68e" opacity=".2"/><circle cx="928.5" cy="531" r=".7" fill="#c9c68e" opacity=".7"/>
<circle cx="867.2" cy="550.2" r="1.4" fill="#c8a283" opacity=".2"/><circle cx="867.2" cy="550.2" r=".7" fill="#c8a283" opacity=".7"/>
<circle cx="754" cy="592.7" r="1.4" fill="#7486ee" opacity=".2"/><circle cx="754" cy="592.7" r=".7" fill="#7486ee" opacity=".7"/>
<circle cx="64.5" cy="616.5" r="1.4" fill="#c9c68e" opacity=".2"/><circle cx="64.5" cy="616.5" r=".7" fill="#c9c68e" opacity=".7"/>
<circle cx="207.2" cy="631.5" r="1.4" fill="#c9c68e" opacity=".2"/><circle cx="207.2" cy="631.5" r=".7" fill="#c9c68e" opacity=".7"/>
<circle cx="325.2" cy="631" r="1.4" fill="#7486ee" opacity=".2"/><circle cx="325.2" cy="631" r=".7" fill="#7486ee" opacity=".7"/>
<circle cx="352.7" cy="633.5" r="1.4" fill="#a0a8b8" opacity=".2"/><circle cx="352.7" cy="633.5" r=".7" fill="#a0a8b8" opacity=".7"/>
<circle cx="260.2" cy="655.5" r="1.4" fill="#c8a283" opacity=".2"/><circle cx="260.2" cy="655.5" r=".7" fill="#c8a283" opacity=".7"/>
<circle cx="151.2" cy="662" r="1.4" fill="#7486ee" opacity=".2"/><circle cx="151.2" cy="662" r=".7" fill="#7486ee" opacity=".7"/>
<circle cx="251.7" cy="672.2" r="1.4" fill="#7486ee" opacity=".2"/><circle cx="251.7" cy="672.2" r=".7" fill="#7486ee" opacity=".7"/>
<circle cx="110.2" cy="676.5" r="1.4" fill="#c8a283" opacity=".2"/><circle cx="110.2" cy="676.5" r=".7" fill="#c8a283" opacity=".7"/>
<circle cx="198.2" cy="691.5" r="1.4" fill="#7486ee" opacity=".2"/><circle cx="198.2" cy="691.5" r=".7" fill="#7486ee" opacity=".7"/>
<circle cx="60.2" cy="697.2" r="1.4" fill="#c9c68e" opacity=".2"/><circle cx="60.2" cy="697.2" r=".7" fill="#c9c68e" opacity=".7"/>
<circle cx="68.5" cy="703.5" r="1.4" fill="#c8a283" opacity=".2"/><circle cx="68.5" cy="703.5" r=".7" fill="#c8a283" opacity=".7"/>
<circle cx="65.2" cy="729.7" r="1.4" fill="#c8a283" opacity=".2"/><circle cx="65.2" cy="729.7" r=".7" fill="#c8a283" opacity=".7"/>
<circle cx="82.2" cy="743.5" r="1.4" fill="#c8a283" opacity=".2"/><circle cx="82.2" cy="743.5" r=".7" fill="#c8a283" opacity=".7"/>
<circle cx="324.7" cy="737.5" r="1.4" fill="#a0a8b8" opacity=".2"/><circle cx="324.7" cy="737.5" r=".7" fill="#a0a8b8" opacity=".7"/>
<circle cx="144.5" cy="750.7" r="1.4" fill="#a0a8b8" opacity=".2"/><circle cx="144.5" cy="750.7" r=".7" fill="#a0a8b8" opacity=".7"/>
<circle cx="259" cy="748.5" r="1.4" fill="#a0a8b8" opacity=".2"/><circle cx="259" cy="748.5" r=".7" fill="#a0a8b8" opacity=".7"/>
<circle cx="145.7" cy="769" r="1.4" fill="#c9c68e" opacity=".2"/><circle cx="145.7" cy="769" r=".7" fill="#c9c68e" opacity=".7"/>
<circle cx="155.2" cy="789.5" r="1.4" fill="#c8a283" opacity=".2"/><circle cx="155.2" cy="789.5" r=".7" fill="#c8a283" opacity=".7"/>
<circle cx="174.2" cy="800.2" r="1.4" fill="#c9c68e" opacity=".2"/><circle cx="174.2" cy="800.2" r=".7" fill="#c9c68e" opacity=".7"/>
<circle cx="57.5" cy="800" r="1.4" fill="#c8a283" opacity=".2"/><circle cx="57.5" cy="800" r=".7" fill="#c8a283" opacity=".7"/>
<circle cx="70.4" cy="858.6" r="1.4" fill="#c8a283" opacity=".2"/><circle cx="70.4" cy="858.6" r=".7" fill="#c8a283" opacity=".7"/>
<circle cx="377.5" cy="607" r="1.4" fill="#7486ee" opacity=".2"/><circle cx="377.5" cy="607" r=".7" fill="#7486ee" opacity=".7"/>
<circle cx="406.7" cy="617" r="1.4" fill="#7486ee" opacity=".2"/><circle cx="406.7" cy="617" r=".7" fill="#7486ee" opacity=".7"/>
<circle cx="392" cy="621.7" r="1.4" fill="#cf7763" opacity=".2"/><circle cx="392" cy="621.7" r=".7" fill="#cf7763" opacity=".7"/>
<circle cx="404.2" cy="634.7" r="1.4" fill="#c3cbe0" opacity=".2"/><circle cx="404.2" cy="634.7" r=".7" fill="#c3cbe0" opacity=".7"/>
<circle cx="369.2" cy="638.2" r="1.4" fill="#7486ee" opacity=".2"/><circle cx="369.2" cy="638.2" r=".7" fill="#7486ee" opacity=".7"/>
<circle cx="498.7" cy="602" r="1.4" fill="#c9c68e" opacity=".2"/><circle cx="498.7" cy="602" r=".7" fill="#c9c68e" opacity=".7"/>
<circle cx="564.7" cy="620.5" r="1.4" fill="#7486ee" opacity=".2"/><circle cx="564.7" cy="620.5" r=".7" fill="#7486ee" opacity=".7"/>
<circle cx="522.2" cy="650.5" r="1.4" fill="#7486ee" opacity=".2"/><circle cx="522.2" cy="650.5" r=".7" fill="#7486ee" opacity=".7"/>
<circle cx="605" cy="649" r="1.4" fill="#a0a8b8" opacity=".2"/><circle cx="605" cy="649" r=".7" fill="#a0a8b8" opacity=".7"/>
<circle cx="501" cy="665.7" r="1.4" fill="#c3cbe0" opacity=".2"/><circle cx="501" cy="665.7" r=".7" fill="#c3cbe0" opacity=".7"/>
<circle cx="587.2" cy="663.2" r="1.4" fill="#c9c68e" opacity=".2"/><circle cx="587.2" cy="663.2" r=".7" fill="#c9c68e" opacity=".7"/>
<circle cx="472.2" cy="687.7" r="1.4" fill="#c9c68e" opacity=".2"/><circle cx="472.2" cy="687.7" r=".7" fill="#c9c68e" opacity=".7"/>
<circle cx="416.5" cy="701" r="1.4" fill="#c8a283" opacity=".2"/><circle cx="416.5" cy="701" r=".7" fill="#c8a283" opacity=".7"/>
<circle cx="414.5" cy="714" r="1.4" fill="#c3cbe0" opacity=".2"/><circle cx="414.5" cy="714" r=".7" fill="#c3cbe0" opacity=".7"/>
<circle cx="475.5" cy="744.2" r="1.4" fill="#c8a283" opacity=".2"/><circle cx="475.5" cy="744.2" r=".7" fill="#c8a283" opacity=".7"/>
<circle cx="520.2" cy="747.7" r="1.4" fill="#c3cbe0" opacity=".2"/><circle cx="520.2" cy="747.7" r=".7" fill="#c3cbe0" opacity=".7"/>
<circle cx="441.5" cy="797" r="1.4" fill="#cf7763" opacity=".2"/><circle cx="441.5" cy="797" r=".7" fill="#cf7763" opacity=".7"/>
<circle cx="656.2" cy="793" r="1.4" fill="#c8a283" opacity=".2"/><circle cx="656.2" cy="793" r=".7" fill="#c8a283" opacity=".7"/>
<circle cx="735.2" cy="607" r="1.4" fill="#c8a283" opacity=".2"/><circle cx="735.2" cy="607" r=".7" fill="#c8a283" opacity=".7"/>
<circle cx="667" cy="635.7" r="1.4" fill="#a0a8b8" opacity=".2"/><circle cx="667" cy="635.7" r=".7" fill="#a0a8b8" opacity=".7"/>
<circle cx="709.2" cy="668.7" r="1.4" fill="#7486ee" opacity=".2"/><circle cx="709.2" cy="668.7" r=".7" fill="#7486ee" opacity=".7"/>
<circle cx="733" cy="688.2" r="1.4" fill="#7486ee" opacity=".2"/><circle cx="733" cy="688.2" r=".7" fill="#7486ee" opacity=".7"/>
<circle cx="844" cy="659.2" r="1.4" fill="#7486ee" opacity=".2"/><circle cx="844" cy="659.2" r=".7" fill="#7486ee" opacity=".7"/>
<circle cx="840.7" cy="661" r="1.4" fill="#a0a8b8" opacity=".2"/><circle cx="840.7" cy="661" r=".7" fill="#a0a8b8" opacity=".7"/>
<circle cx="862" cy="667.2" r="1.4" fill="#c9c68e" opacity=".2"/><circle cx="862" cy="667.2" r=".7" fill="#c9c68e" opacity=".7"/>
<circle cx="947.7" cy="660.2" r="1.4" fill="#a0a8b8" opacity=".2"/><circle cx="947.7" cy="660.2" r=".7" fill="#a0a8b8" opacity=".7"/>
<circle cx="796.5" cy="687.5" r="1.4" fill="#c8a283" opacity=".2"/><circle cx="796.5" cy="687.5" r=".7" fill="#c8a283" opacity=".7"/>
<circle cx="871.7" cy="711.2" r="1.4" fill="#c8a283" opacity=".2"/><circle cx="871.7" cy="711.2" r=".7" fill="#c8a283" opacity=".7"/>
<circle cx="935.2" cy="738" r="1.4" fill="#7486ee" opacity=".2"/><circle cx="935.2" cy="738" r=".7" fill="#7486ee" opacity=".7"/>
<circle cx="747.2" cy="758.5" r="1.4" fill="#cf7763" opacity=".2"/><circle cx="747.2" cy="758.5" r=".7" fill="#cf7763" opacity=".7"/>
<circle cx="713.2" cy="772" r="1.4" fill="#a0a8b8" opacity=".2"/><circle cx="713.2" cy="772" r=".7" fill="#a0a8b8" opacity=".7"/>
<circle cx="811.2" cy="783.5" r="1.4" fill="#c8a283" opacity=".2"/><circle cx="811.2" cy="783.5" r=".7" fill="#c8a283" opacity=".7"/>
<circle cx="924.5" cy="786.7" r="1.4" fill="#c8a283" opacity=".2"/><circle cx="924.5" cy="786.7" r=".7" fill="#c8a283" opacity=".7"/>
<circle cx="969.5" cy="608.8" r="1.4" fill="#c9c68e" opacity=".2"/><circle cx="969.5" cy="608.8" r=".7" fill="#c9c68e" opacity=".7"/>
<circle cx="958" cy="796.6" r="1.4" fill="#a0a8b8" opacity=".2"/><circle cx="958" cy="796.6" r=".7" fill="#a0a8b8" opacity=".7"/>
<circle cx="976.5" cy="559.6" r="1.4" fill="#a0a8b8" opacity=".2"/><circle cx="976.5" cy="559.6" r=".7" fill="#a0a8b8" opacity=".7"/>
<circle cx="114.5" cy="162" r="3.40" fill="url(#gw)" opacity=".55"/><circle cx="114.5" cy="162" r=".85" fill="#fff" opacity=".9"/>
<circle cx="222.5" cy="185" r="2.98" fill="url(#gy)" opacity=".55"/><circle cx="222.5" cy="185" r=".85" fill="#fff" opacity=".9"/>
<circle cx="117.5" cy="343" r="2.98" fill="url(#gw)" opacity=".55"/><circle cx="117.5" cy="343" r=".85" fill="#fff" opacity=".9"/>
<circle cx="353.7" cy="229" r="3.40" fill="url(#gw)" opacity=".55"/><circle cx="353.7" cy="229" r=".85" fill="#fff" opacity=".9"/>
<circle cx="349.5" cy="340" r="3.40" fill="url(#go)" opacity=".55"/><circle cx="349.5" cy="340" r=".85" fill="#fff" opacity=".9"/>
<circle cx="292.5" cy="338.5" r="2.55" fill="url(#gb)" opacity=".55"/><circle cx="292.5" cy="338.5" r=".85" fill="#fff" opacity=".9"/>
<circle cx="497.5" cy="304" r="2.55" fill="url(#gy)" opacity=".55"/><circle cx="497.5" cy="304" r=".85" fill="#fff" opacity=".9"/>
<circle cx="367.5" cy="373" r="2.98" fill="url(#go)" opacity=".55"/><circle cx="367.5" cy="373" r=".85" fill="#fff" opacity=".9"/>
<circle cx="407" cy="410.2" r="2.55" fill="url(#gy)" opacity=".55"/><circle cx="407" cy="410.2" r=".85" fill="#fff" opacity=".9"/>
<circle cx="674" cy="291" r="3.82" fill="url(#gw)" opacity=".55"/><circle cx="674" cy="291" r=".85" fill="#fff" opacity=".9"/>
<circle cx="913.2" cy="420.7" r="3.40" fill="url(#gy)" opacity=".55"/><circle cx="913.2" cy="420.7" r=".85" fill="#fff" opacity=".9"/>
<circle cx="859" cy="434.2" r="3.82" fill="url(#gb)" opacity=".55"/><circle cx="859" cy="434.2" r=".85" fill="#fff" opacity=".9"/>
<circle cx="865.2" cy="449.5" r="2.98" fill="url(#go)" opacity=".55"/><circle cx="865.2" cy="449.5" r=".85" fill="#fff" opacity=".9"/>
<circle cx="744.2" cy="558.7" r="3.82" fill="url(#go)" opacity=".55"/><circle cx="744.2" cy="558.7" r=".85" fill="#fff" opacity=".9"/>
<circle cx="223.2" cy="473.5" r="2.98" fill="url(#gb)" opacity=".55"/><circle cx="223.2" cy="473.5" r=".85" fill="#fff" opacity=".9"/>
<circle cx="244.5" cy="485.2" r="2.98" fill="url(#gb)" opacity=".55"/><circle cx="244.5" cy="485.2" r=".85" fill="#fff" opacity=".9"/>
<circle cx="167" cy="564.5" r="3.40" fill="url(#gw)" opacity=".55"/><circle cx="167" cy="564.5" r=".85" fill="#fff" opacity=".9"/>
<circle cx="376.5" cy="481" r="2.55" fill="url(#gy)" opacity=".55"/><circle cx="376.5" cy="481" r=".85" fill="#fff" opacity=".9"/>
<circle cx="434" cy="539.5" r="3.82" fill="url(#gb)" opacity=".55"/><circle cx="434" cy="539.5" r=".85" fill="#fff" opacity=".9"/>
<circle cx="470.5" cy="407.5" r="2.55" fill="url(#gb)" opacity=".55"/><circle cx="470.5" cy="407.5" r=".85" fill="#fff" opacity=".9"/>
<circle cx="511.2" cy="409" r="2.55" fill="url(#gb)" opacity=".55"/><circle cx="511.2" cy="409" r=".85" fill="#fff" opacity=".9"/>
<circle cx="473.7" cy="571" r="2.55" fill="url(#gb)" opacity=".55"/><circle cx="473.7" cy="571" r=".85" fill="#fff" opacity=".9"/>
<circle cx="246.5" cy="675.7" r="3.40" fill="url(#gb)" opacity=".55"/><circle cx="246.5" cy="675.7" r=".85" fill="#fff" opacity=".9"/>
<circle cx="231.2" cy="675.7" r="2.55" fill="url(#gy)" opacity=".55"/><circle cx="231.2" cy="675.7" r=".85" fill="#fff" opacity=".9"/>
<circle cx="240.2" cy="682.2" r="2.12" fill="url(#gb)" opacity=".55"/><circle cx="240.2" cy="682.2" r=".85" fill="#fff" opacity=".9"/>
<circle cx="136.5" cy="726.2" r="2.55" fill="url(#gb)" opacity=".55"/><circle cx="136.5" cy="726.2" r=".85" fill="#fff" opacity=".9"/>
<circle cx="191.7" cy="740" r="2.55" fill="url(#gb)" opacity=".55"/><circle cx="191.7" cy="740" r=".85" fill="#fff" opacity=".9"/>
<circle cx="83.2" cy="806.5" r="2.98" fill="url(#gy)" opacity=".55"/><circle cx="83.2" cy="806.5" r=".85" fill="#fff" opacity=".9"/>
<circle cx="417.7" cy="790.7" r="2.55" fill="url(#go)" opacity=".55"/><circle cx="417.7" cy="790.7" r=".85" fill="#fff" opacity=".9"/>
<circle cx="533.5" cy="670.5" r="2.98" fill="url(#gb)" opacity=".55"/><circle cx="533.5" cy="670.5" r=".85" fill="#fff" opacity=".9"/>
<circle cx="425.7" cy="736.7" r="2.55" fill="url(#gb)" opacity=".55"/><circle cx="425.7" cy="736.7" r=".85" fill="#fff" opacity=".9"/>
<circle cx="613.7" cy="733.5" r="3.40" fill="url(#gb)" opacity=".55"/><circle cx="613.7" cy="733.5" r=".85" fill="#fff" opacity=".9"/>
<circle cx="651.5" cy="803.2" r="2.55" fill="url(#gy)" opacity=".55"/><circle cx="651.5" cy="803.2" r=".85" fill="#fff" opacity=".9"/>
<circle cx="939.2" cy="720.7" r="3.82" fill="url(#gb)" opacity=".55"/><circle cx="939.2" cy="720.7" r=".85" fill="#fff" opacity=".9"/>
<circle cx="893.2" cy="788.2" r="3.40" fill="url(#gy)" opacity=".55"/><circle cx="893.2" cy="788.2" r=".85" fill="#fff" opacity=".9"/>
<circle cx="927.7" cy="813.5" r="2.12" fill="url(#go)" opacity=".55"/><circle cx="927.7" cy="813.5" r=".85" fill="#fff" opacity=".9"/>
<circle cx="200.7" cy="339.5" r="7" fill="url(#gw)" opacity=".75"/><circle cx="200.7" cy="339.5" r="1.3" fill="#fff"/>
<circle cx="821.2" cy="222.7" r="7" fill="url(#gw)" opacity=".75"/><circle cx="821.2" cy="222.7" r="1.3" fill="#fff"/>
<circle cx="593.2" cy="502.7" r="8" fill="url(#gb)" opacity=".75"/><circle cx="593.2" cy="502.7" r="1.3" fill="#fff"/>
<circle cx="214.7" cy="758.5" r="7.5" fill="url(#gw)" opacity=".75"/><circle cx="214.7" cy="758.5" r="1.3" fill="#fff"/>
<circle cx="148.2" cy="620.7" r="8" fill="url(#go)" opacity=".75"/><circle cx="148.2" cy="620.7" r="1.3" fill="#fff"/>
<circle cx="527" cy="832.5" r="6.5" fill="url(#go)" opacity=".75"/><circle cx="527" cy="832.5" r="1.3" fill="#fff"/>
<circle cx="920.2" cy="351" r="11" fill="url(#gy)"/><path d="M906 351h28M920.2 339v24" stroke="#f0e8c0" stroke-width=".8" opacity=".5"/><circle cx="920.2" cy="351" r="2.6" fill="#fffff0"/>
<circle cx="517" cy="536" r="13" fill="url(#gy)" opacity=".8"/><path d="M503 536h28M517 524v24" stroke="#e8e8d0" stroke-width=".8" opacity=".45"/><ellipse cx="517.5" cy="536.3" rx="5.6" ry="4.4" fill="#fff" transform="rotate(-20 517.5 536.3)"/><path d="M513.5 532.5a5 4 0 0 1 6-1" stroke="#222" stroke-width="1.2" fill="none"/>
<text x="212" y="344" font-size="12" fill="#d6d4f6" font-weight="500" textLength="44" lengthAdjust="spacingAndGlyphs">アルヘナ</text>
<text x="295.7" y="205" font-size="12" fill="#b4b4b4" font-weight="bold" textLength="32.5" lengthAdjust="spacingAndGlyphs">ふたご</text>
<text x="833" y="227" font-size="12" fill="#d6d4f6" font-weight="500" textLength="59" lengthAdjust="spacingAndGlyphs">メンカリナン</text>
<text x="843" y="330" font-size="12" fill="#b4b4b4" font-weight="bold" textLength="38.5" lengthAdjust="spacingAndGlyphs">ぎょしゃ</text>
<text x="932.7" y="355.5" font-size="12" fill="#d6d4f6" font-weight="500" textLength="31.5" lengthAdjust="spacingAndGlyphs">カペラ</text>
<text x="603" y="506.5" font-size="12" fill="#d6d4f6" font-weight="500" textLength="43" lengthAdjust="spacingAndGlyphs">エルナト</text>
<text x="160.7" y="625" font-size="12" fill="#d6d4f6" font-weight="500" textLength="66" lengthAdjust="spacingAndGlyphs">ベテルギウス</text>
<text x="103.7" y="752.5" font-size="12" fill="#b4b4b4" font-weight="bold" textLength="38.5" lengthAdjust="spacingAndGlyphs">オリオン</text>
<text x="225.7" y="763" font-size="12" fill="#d6d4f6" font-weight="500" textLength="58.5" lengthAdjust="spacingAndGlyphs">ベラトリクス</text>
<text x="45" y="795.5" font-size="12" fill="#d6d4f6" font-weight="500" textLength="46" lengthAdjust="spacingAndGlyphs">アルニタク</text>
<text x="67" y="804" font-size="12" fill="#d6d4f6" font-weight="500" textLength="48" lengthAdjust="spacingAndGlyphs">アルニラム</text>
<text x="92" y="811.5" font-size="12" fill="#d6d4f6" font-weight="500" textLength="38.7" lengthAdjust="spacingAndGlyphs">ミンタカ</text>
<text x="537.8" y="836.5" font-size="12" fill="#d6d4f6" font-weight="500" textLength="64.5" lengthAdjust="spacingAndGlyphs">アルデバラン</text>
<text x="531.2" y="540.5" font-size="13" fill="#fff" font-weight="bold" textLength="28" lengthAdjust="spacingAndGlyphs">金星</text>
</svg>
<div class="abs" style="left:13px;top:169px;width:34px;height:34px;background:rgba(8,74,70,.93);border:1px solid #063833;border-radius:3px"></div>
<div class="abs" style="left:18px;top:173px;font-size:12px;line-height:14px;color:#6fd0b8">視野</div>
<div class="abs" style="left:19px;top:190px;font:11px/13px 'Liberation Mono',monospace;color:#6fd0b8;letter-spacing:.1px">45.0</div>
<div class="abs" style="left:13px;top:214px;width:34px;height:34px;background:rgba(8,74,70,.93);border:1px solid #063833;border-radius:3px"><div class="abs" style="left:10px;top:11px;border:6.5px solid transparent;border-top:none;border-bottom:10.500px solid #8fdcc8"></div></div>
<div class="abs" style="left:13px;top:532px;width:34px;height:34px;background:rgba(8,74,70,.93);border:1px solid #063833;border-radius:3px"><div class="abs" style="left:10px;top:12px;border:6.5px solid transparent;border-bottom:none;border-top:10.500px solid #6fd0b8"></div></div>
<div class="abs" style="left:26px;top:263px;width:8px;height:249px;background:#06443a;border:1px solid #04130f"></div>
<div class="abs" style="left:27px;top:413px;width:6px;height:98px;background:#3f8a7b"></div>
<div class="abs" style="left:27px;top:325px;width:6px;height:1px;background:#04130f"></div>
<div class="abs" style="left:27px;top:387px;width:6px;height:1px;background:#04130f"></div>
<div class="abs" style="left:27px;top:449px;width:6px;height:1px;background:#357868"></div>
<svg class="abs" style="left:10px;top:403px" width="40" height="18" viewBox="0 0 40 18"><path d="M1.500 1.500h6l7.500 7.500-7.500 7.500h-6z" fill="#3f9282" stroke="#04130f"/><path d="M38.500 1.500h-6l-7.500 7.500 7.500 7.500h6z" fill="#3f9282" stroke="#04130f"/><path d="M3.500 4v10M5.500 4v10M34.500 4v10M36.500 4v10" stroke="#0a3a32"/></svg><!--SKY1-->
</div>
<div id="compass">
<div class="abs" style="left:59px;top:2px;width:14px;height:15px;border:1px solid #d01010;background:#7a0c0c;color:#ff2020;font-size:12px;line-height:13px;font-weight:bold;text-align:center;font-family:'Liberation Sans','Noto Sans CJK JP',sans-serif">西</div>
<div class="abs" style="left:508px;top:2px;width:36px;font-size:12px;line-height:14px;font-weight:bold;color:#a0a0a0;white-space:nowrap;font-family:'Liberation Sans','Noto Sans CJK JP',sans-serif">西北西</div>
<div class="abs" id="copy" style="left:784px;top:-1px;font-size:15.5px;line-height:20px;font-weight:bold;color:#9c9c9c;white-space:nowrap;font-family:'Liberation Sans','Noto Sans CJK JP',sans-serif;letter-spacing:1.2px">©アストロアーツ</div>
</div>
<div id="hscroll">
<svg class="abs" style="left:2px;top:1px" width="15" height="15" viewBox="0 0 15 15"><rect x="0.500" y="0.500" width="14" height="14" fill="#2e2e2e" stroke="#050505"/><rect x="1.500" y="1.500" width="12" height="12" fill="none" stroke="#4a4a4a"/><path d="M8.500 3.500v7L4.500 7z" fill="#d8d8d8"/></svg>
<svg class="abs" style="left:904px;top:1px" width="15" height="15" viewBox="0 0 15 15"><rect x="0.500" y="0.500" width="14" height="14" fill="#2e2e2e" stroke="#050505"/><rect x="1.500" y="1.500" width="12" height="12" fill="none" stroke="#4a4a4a"/><path d="M5.500 3.500v7L9.500 7z" fill="#d8d8d8"/></svg>
<div class="abs" style="left:716px;top:1px;width:15px;height:14px;background:#444;border:1px solid #6a6a6a;box-shadow:0 0 0 1px #111"></div>
</div>
<div id="vscroll">
<div class="abs" style="left:0;top:0;width:1px;height:749px;background:#0c0c0c"></div>
<svg class="abs" style="left:1px;top:1px" width="15" height="15" viewBox="0 0 15 15"><rect x="0.500" y="0.500" width="14" height="14" fill="#2e2e2e" stroke="#050505"/><rect x="1.500" y="1.500" width="12" height="12" fill="none" stroke="#4a4a4a"/><path d="M3 9h8L7 4.500z" fill="#d8d8d8"/></svg>
<svg class="abs" style="left:1px;top:716px" width="15" height="15" viewBox="0 0 15 15"><rect x="0.500" y="0.500" width="14" height="14" fill="#2e2e2e" stroke="#050505"/><rect x="1.500" y="1.500" width="12" height="12" fill="none" stroke="#4a4a4a"/><path d="M3 5h8L7 9.500z" fill="#d8d8d8"/></svg>
<div class="abs" style="left:2px;top:570px;width:14px;height:15px;background:#444;border:1px solid #6a6a6a;box-shadow:0 0 0 1px #111"></div>
<div class="abs" style="left:0;top:732px;width:18px;height:17px;background:#262626"></div>
</div>
<div id="right">
<div class="abs" style="left:-1px;top:0;width:1px;height:749px;background:#060606"></div>
<div class="abs" style="left:0;top:1px;width:204px;height:1px;background:#62728c"></div>
<div class="abs" style="left:7px;top:7px;font-weight:bold;font-size:12px;line-height:14px;color:#f0f0f0;font-family:'Liberation Sans','Noto Sans CJK JP',sans-serif">今日の暦</div>
<div class="abs" style="left:0;top:26px;width:204px;height:1px;background:#62728c"></div>
<div class="abs" style="left:0;top:27px;width:204px;height:2px;background:#080808"></div>
<div class="abs" style="left:0;top:29px;width:204px;height:15px;background:linear-gradient(90deg,#5a5a5a,#4a4a4a 50%,#222 95%)"><span class="t" style="left:7px;top:2px">2026年05月13日(水)</span></div>
<div class="abs" style="left:0;top:44px;width:204px;height:1px;background:#111"></div>
<div id="cal"><div class="h"></div><div class="abs" style="left:-6px;top:0;width:173px;text-align:center;font:bold 13.8px/20px 'Liberation Sans','Noto Sans CJK JP',sans-serif;color:#e8e8f0">2026年5月</div><svg class="abs" style="left:5px;top:4px" width="165" height="12" viewBox="0 0 165 12" fill="#e4e4e4"><path d="M6.500 1v10L0.500 6zM13 1v10L7 6zM22 1v10l-5.500-5zM137 1v10l5.500-5zM146 1v10l6-5zM152.500 1v10l6-5z"/></svg><div class="m" style="left:142px;top:24px;background:#c8a830"></div><div class="m" style="left:15px;top:56px;background:linear-gradient(90deg,#c8a830 50%,#0a0a0a 50%)"></div><div class="m" style="left:15px;top:72px;background:#0a0a0a"></div><div class="m" style="left:142px;top:72px;background:linear-gradient(90deg,#0a0a0a 50%,#c8a830 50%)"></div><div class="m" style="left:15px;top:104px;background:#c8a830"></div><div class="d g" style="left:11px;top:24px">26</div><div class="d g" style="left:32px;top:24px">27</div><div class="d g" style="left:53px;top:24px">28</div><div class="d g" style="left:74px;top:24px">29</div><div class="d g" style="left:95px;top:24px">30</div><div class="d" style="left:116px;top:24px">1</div><div class="d" style="left:137px;top:24px">2</div><div class="d" style="left:11px;top:40px">3</div><div class="d" style="left:32px;top:40px">4</div><div class="d" style="left:53px;top:40px">5</div><div class="d" style="left:74px;top:40px">6</div><div class="d" style="left:95px;top:40px">7</div><div class="d" style="left:116px;top:40px">8</div><div class="d" style="left:137px;top:40px">9</div><div class="d" style="left:11px;top:56px">10</div><div class="d" style="left:32px;top:56px">11</div><div class="d" style="left:53px;top:56px">12</div><div class="d" style="left:74px;top:56px">13</div><div class="d" style="left:95px;top:56px">14</div><div class="d" style="left:116px;top:56px">15</div><div class="d" style="left:137px;top:56px">16</div><div class="d" style="left:11px;top:72px">17</div><div class="d" style="left:32px;top:72px">18</div><div class="d" style="left:53px;top:72px">19</div><div class="d" style="left:74px;top:72px">20</div><div class="d" style="left:95px;top:72px">21</div><div class="d" style="left:116px;top:72px">22</div><div class="d" style="left:137px;top:72px">23</div><div class="d" style="left:11px;top:88px">24</div><div class="d" style="left:32px;top:88px">25</div><div class="d" style="left:53px;top:88px">26</div><div class="d" style="left:74px;top:88px">27</div><div class="d" style="left:95px;top:88px">28</div><div class="d" style="left:116px;top:88px">29</div><div class="d" style="left:137px;top:88px">30</div><div class="d" style="left:11px;top:104px">31</div><div class="d g" style="left:32px;top:104px">1</div><div class="d g" style="left:53px;top:104px">2</div><div class="d g" style="left:74px;top:104px">3</div><div class="d g" style="left:95px;top:104px">4</div><div class="d g" style="left:116px;top:104px">5</div><div class="d g" style="left:137px;top:104px">6</div><div class="abs" style="left:76px;top:56px;width:21px;height:16px;border:1px solid #d01818"></div></div>
<div class="bar" style="top:193px">薄明</div>
<div class="t" style="left:32px;top:209px">開始</div><div class="t" style="left:63px;top:209px;text-decoration:underline">02:59</div><div class="t" style="left:106px;top:209px">終了</div><div class="t" style="left:138px;top:209px;text-decoration:underline">20:17</div>
<div class="bar" style="top:229px">出<b class="d">・</b>南中<b class="d">・</b>没</div>
<div class="abs" style="left:14px;top:248px;width:11px;height:11px;background:#333;border:1px solid #555;box-shadow:0 0 0 1px #1a1a1a inset"></div>
<div class="t" style="left:30px;top:248px">惑星の出没時刻を表示</div>
<div class="t" style="left:17px;top:268px">太陽</div><div class="t" style="left:74px;top:268px">04:38</div><div class="t" style="left:117px;top:268px">11:37</div><div class="t" style="left:159px;top:268px">18:37</div>
<div class="t" style="left:17px;top:284px">月</div><div class="t" style="left:74px;top:284px">02:04</div><div class="t" style="left:117px;top:284px">08:13</div><div class="t" style="left:159px;top:284px">14:33</div>
<div class="bar" style="top:312px">暦<b class="d">・</b>天文現象</div>
<div class="t" style="left:17px;top:335px">旧暦 2026年 3月27日</div>
<div class="t" style="left:17px;top:347px">月齢 25.6</div>
<div class="t" style="left:18px;top:371px"><span style="font-family:'IPAGothic','Noto Sans CJK JP',sans-serif;color:#c8c8c8;letter-spacing:0">■</span>02時01分</div>
<div class="t" style="left:27px;top:383px">月が天の赤道通過</div>
<div class="t" style="left:18px;top:395px"><span style="font-family:'IPAGothic','Noto Sans CJK JP',sans-serif;color:#c8c8c8;letter-spacing:0">■</span>16時54分</div>
<div class="t" style="left:27px;top:407px">月が海王星と接近</div>
<div class="t" style="left:21px;top:419px">（方位338<i class="dg">°</i> 角距離3.5<i class="dg">°</i> ）</div>
<div class="t" style="left:18px;top:431px"><span style="font-family:'IPAGothic','Noto Sans CJK JP',sans-serif;color:#c8c8c8;letter-spacing:0">■</span>18時51分</div>
<div class="t" style="left:27px;top:443px">月が海王星の北3.7<i class="dg">°</i> 通過</div>
<div class="abs" style="left:0;top:702px;width:204px;height:2px;background:#000"></div>
<div class="abs" style="left:0;top:704px;width:204px;height:20px;background:linear-gradient(90deg,#1a1a1a,#0a0a0a 60%,#020202)"><svg class="abs" style="left:5px;top:3px" width="17" height="15" viewBox="0 0 17 15"><path d="M4 0.500h12l-3.500 11H0.500z" fill="#8090d8"/><path d="M3 13.500h10l1-2" fill="none" stroke="#aab4e8" stroke-width="1.200"/><text x="8" y="9.500" font-size="9" font-weight="bold" font-style="italic" text-anchor="middle" fill="#fff" font-family="Liberation Sans,sans-serif">7</text></svg><span class="abs" style="left:26px;top:4px;font-weight:bold;font-size:12px;line-height:14px;color:#eee;font-family:'Liberation Sans','Noto Sans CJK JP',sans-serif">今日の暦</span></div>
<div class="abs" style="left:0;top:724px;width:204px;height:2px;background:#585858"></div>
<div class="abs" style="left:0;top:726px;width:204px;height:2px;background:#0a0a0a"></div>
<div class="abs" style="left:0;top:728px;width:204px;height:19px;background:linear-gradient(90deg,#3a4a82,#32407a 40%,#1a2440)"><svg class="abs" style="left:5px;top:2px" width="18" height="16" viewBox="0 0 18 16"><circle cx="7" cy="7" r="6.500" fill="#8898d8"/><path d="M7 0.500a6.500 6.500 0 0 0 0 13z" fill="#c8d0f0"/><rect x="9.500" y="8" width="8" height="8" fill="#dde" stroke="#445" stroke-width=".6"/><path d="M11 10.500h5M11 12.500h5M11 14.500h5" stroke="#445" stroke-dasharray="1 1"/></svg><span class="abs" style="left:26px;top:3px;font-weight:bold;font-size:12px;line-height:14px;color:#f4f4f4;font-family:'Liberation Sans','Noto Sans CJK JP',sans-serif">天文現象ガイド</span></div>
<div class="abs" style="left:0;top:747px;width:204px;height:2px;background:#555"></div>
</div>
</div>
</div>
</body>
</html>
